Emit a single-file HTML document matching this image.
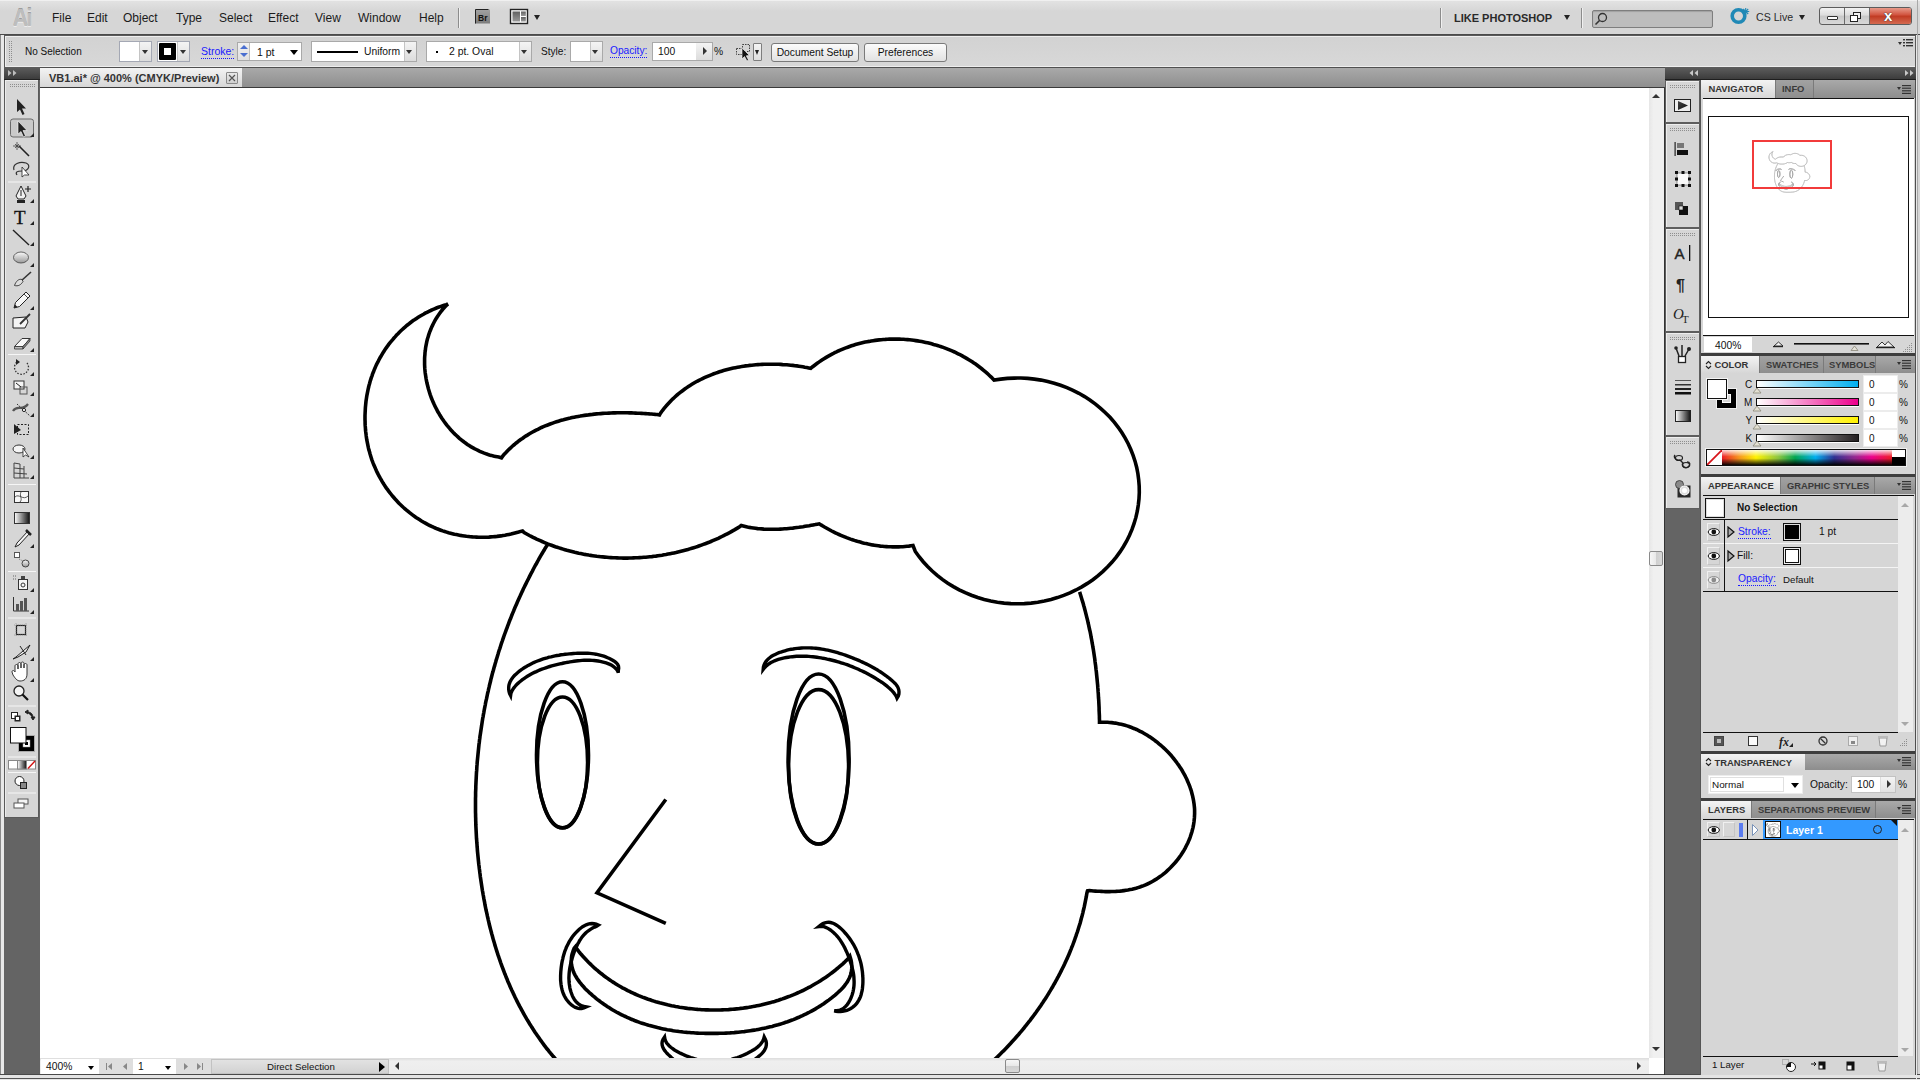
<!DOCTYPE html>
<html><head><meta charset="utf-8">
<style>
*{margin:0;padding:0;box-sizing:border-box}
html,body{width:1920px;height:1080px;overflow:hidden;background:#d6d6d6;font-family:"Liberation Sans",sans-serif;font-size:10.3px;color:#111;position:relative}
.a{position:absolute}
.t{position:absolute;white-space:nowrap;line-height:1}
.lnk{color:#1a1aff;border-bottom:1px dotted #1a1aff}
.box{position:absolute;background:#fff;border:1px solid #a9a9a9}
.dd{position:absolute;background:linear-gradient(#f4f4f4,#dcdcdc);border-left:1px solid #c4c4c4}
.tri{position:absolute;width:0;height:0;border-left:4px solid transparent;border-right:4px solid transparent;border-top:4px solid #222}
.btn{position:absolute;background:linear-gradient(#fbfbfb,#e2e2e2);border:1px solid #7a7a7a;border-radius:3px;text-align:center;font-size:10.3px}
.ptab{position:absolute;font-weight:bold;font-size:9.4px;color:#333;white-space:nowrap;line-height:1}
.hdr{position:absolute;background:linear-gradient(#5e5e5e,#3c3c3c)}
.tabbar{position:absolute;background:linear-gradient(#a9a9a9,#8d8d8d)}
.tabon{position:absolute;background:linear-gradient(#f3f3f3,#d7d7d7)}
.taboff{position:absolute;background:linear-gradient(#a2a2a2,#8e8e8e);border-left:1px solid #7a7a7a;border-right:1px solid #7a7a7a}
.sep{position:absolute;background:#3e3e3e}
.grip{position:absolute;background-image:linear-gradient(90deg,transparent 1px,#d6d6d6 1px),linear-gradient(#8e8e8e 1px,transparent 1px);background-size:2px 2px}
.pmenu{position:absolute;width:15px;height:9px}
</style></head><body>
<!-- window frame -->
<div class="a" style="left:0;top:0;width:1920px;height:35px;background:linear-gradient(#e2e2e2,#d6d6d6 30%,#d6d6d6);border-top:1px solid #f0f0f0"></div>
<div class="a" style="left:0;top:34px;width:1920px;height:1px;background:#4a4a4a"></div>
<div class="a" style="left:0;top:35px;width:4px;height:1040px;background:#e8e8e8"></div><div class="a" style="left:0;top:35px;width:1px;height:1040px;background:#8a8a8a"></div>
<div class="a" style="left:1917px;top:0;width:1px;height:1080px;background:#a8a8a8"></div>
<div class="t" style="left:12.5px;top:6.5px;font-size:23.5px;font-weight:bold;color:#bdbdbd;text-shadow:0 1px 0 #ececec,0 -1px 0 #9c9c9c;letter-spacing:-1.5px;transform:scaleX(0.88);transform-origin:0 0">Ai</div>
<div class="t" style="left:52px;top:12.3px;font-size:12px;color:#1b1b1b">File</div>
<div class="t" style="left:87px;top:12.3px;font-size:12px;color:#1b1b1b">Edit</div>
<div class="t" style="left:123px;top:12.3px;font-size:12px;color:#1b1b1b">Object</div>
<div class="t" style="left:176px;top:12.3px;font-size:12px;color:#1b1b1b">Type</div>
<div class="t" style="left:219px;top:12.3px;font-size:12px;color:#1b1b1b">Select</div>
<div class="t" style="left:268px;top:12.3px;font-size:12px;color:#1b1b1b">Effect</div>
<div class="t" style="left:315px;top:12.3px;font-size:12px;color:#1b1b1b">View</div>
<div class="t" style="left:358px;top:12.3px;font-size:12px;color:#1b1b1b">Window</div>
<div class="t" style="left:419px;top:12.3px;font-size:12px;color:#1b1b1b">Help</div>
<div class="a" style="left:458px;top:8px;width:1px;height:20px;background:#8c8c8c;box-shadow:1px 0 0 #f0f0f0"></div>
<svg class="a" style="left:474px;top:8px" width="58" height="18">
<defs><linearGradient id="brg" x1="0" y1="0" x2="0" y2="1"><stop offset="0" stop-color="#a2a2a2"/><stop offset="1" stop-color="#7c7c7c"/></linearGradient>
<linearGradient id="lyg" x1="0" y1="0" x2="0" y2="1"><stop offset="0" stop-color="#606060"/><stop offset="1" stop-color="#9a9a9a"/></linearGradient></defs>
<rect x="1" y="1.5" width="15" height="14" fill="url(#brg)"/><path d="M1.5 15.5 L1.5 1.5 L14.5 1.5" fill="none" stroke="#222" stroke-width="1"/>
<text x="4" y="12.5" font-family="Liberation Sans" font-size="8.5" font-weight="bold" fill="#111">Br</text>
<rect x="36.5" y="1.5" width="17" height="14" fill="#fff" stroke="#222" stroke-width="1.4"/>
<rect x="38.5" y="3.5" width="7.5" height="10" fill="url(#lyg)"/><rect x="47" y="3.5" width="4.8" height="4.5" fill="url(#lyg)"/><rect x="47" y="9" width="4.8" height="4.5" fill="url(#lyg)"/>
</svg>
<div class="tri" style="left:534px;top:15px;border-left-width:3.5px;border-right-width:3.5px;border-top-width:5px"></div>
<div class="a" style="left:1440px;top:8px;width:1px;height:20px;background:#8c8c8c;box-shadow:1px 0 0 #f0f0f0"></div>
<div class="t" style="left:1454px;top:12.6px;font-size:11px;font-weight:bold;color:#2a2a2a">LIKE PHOTOSHOP</div>
<div class="tri" style="left:1564px;top:15px;border-left-width:3.5px;border-right-width:3.5px;border-top-width:5px"></div>
<div class="a" style="left:1581px;top:8px;width:1px;height:20px;background:#8c8c8c;box-shadow:1px 0 0 #f0f0f0"></div>
<div class="a" style="left:1592px;top:10px;width:121px;height:18px;background:#bdbdbd;border:1px solid #7e7e7e;border-radius:2px;box-shadow:inset 0 1px 1px #a0a0a0"></div>
<svg class="a" style="left:1594px;top:12px" width="14" height="14"><circle cx="8.5" cy="5.5" r="4" fill="none" stroke="#333" stroke-width="1.3"/><line x1="5.5" y1="8.5" x2="1.5" y2="12.5" stroke="#333" stroke-width="1.6"/></svg>
<svg class="a" style="left:1728px;top:6px" width="22" height="20"><circle cx="10.5" cy="10" r="6.3" fill="none" stroke="#2089b6" stroke-width="3.6"/><g stroke="#2089b6" stroke-width="1.1"><line x1="17.7" y1="2" x2="17.7" y2="9"/><line x1="14.2" y1="5.5" x2="21.2" y2="5.5"/><line x1="15.2" y1="3" x2="20.2" y2="8"/><line x1="20.2" y1="3" x2="15.2" y2="8"/></g></svg>
<div class="t" style="left:1756px;top:11.7px;font-size:10.6px;color:#2a2a2a">CS Live</div>
<div class="tri" style="left:1799px;top:14.5px;border-left-width:3.5px;border-right-width:3.5px;border-top-width:5px"></div>
<div class="a" style="left:1819px;top:7px;width:93px;height:18px;border:1px solid #5c5c5c;border-radius:3px;overflow:hidden;background:linear-gradient(#f2f2f2,#dcdcdc 45%,#c8c8c8 50%,#d8d8d8)">
 <div class="a" style="left:24px;top:0;width:1px;height:16px;background:#6a6a6a"></div>
 <div class="a" style="left:49px;top:0;width:1px;height:16px;background:#6a6a6a"></div>
 <div class="a" style="left:50px;top:0;width:42px;height:16px;background:linear-gradient(#e89a8a,#d0513c 45%,#c03a22 50%,#d46a50)"></div>
 <div class="a" style="left:7px;top:8px;width:11px;height:4px;background:#fff;border:1px solid #333;border-radius:1px"></div>
 <div class="a" style="left:33px;top:4px;width:8px;height:7px;border:1.5px solid #222;background:#f0f0f0"></div>
 <div class="a" style="left:30px;top:7px;width:8px;height:7px;border:1.5px solid #222;background:#fff"></div>
 <div class="t" style="left:64px;top:0px;font-size:15px;font-weight:bold;color:#fff;text-shadow:0 0 1px #333,0 0 1px #333">x</div>
</div>

<div class="a" style="left:4px;top:35px;width:1912px;height:33px;background:linear-gradient(#d2d2d2,#d8d8d8);border-top:1px solid #5a5a5a;border-left:1px solid #5a5a5a;border-right:1px solid #5a5a5a;box-shadow:inset 1px 1px 0 #efefef"></div>
<div class="grip" style="left:9px;top:41px;width:3px;height:21px"></div>
<div class="t" style="left:25px;top:46.5px;font-size:10px">No Selection</div>
<div class="box" style="left:119px;top:41px;width:33px;height:21px;border-color:#a4a8b4"></div>
<div class="dd" style="left:139px;top:42px;width:12px;height:19px"></div>
<div class="tri" style="left:142px;top:50px;border-top-color:#333;border-left-width:3.5px;border-right-width:3.5px"></div>
<div class="box" style="left:157px;top:41px;width:33px;height:21px;border-color:#a4a8b4"></div>
<div class="a" style="left:159px;top:43px;width:17px;height:17px;background:#000;border-radius:1px"></div>
<div class="a" style="left:164px;top:48px;width:7px;height:7px;background:#fff"></div>
<div class="dd" style="left:177px;top:42px;width:12px;height:19px"></div>
<div class="tri" style="left:180px;top:50px;border-top-color:#333;border-left-width:3.5px;border-right-width:3.5px"></div>
<div class="t lnk" style="left:201px;top:46px;font-size:10.5px;padding-bottom:1px">Stroke:</div>
<div class="box" style="left:237px;top:42px;width:65px;height:19px"></div>
<div class="a" style="left:238px;top:43px;width:12px;height:17px;background:linear-gradient(#f0f0f0,#e0e0e0);border-right:1px solid #bdbdbd"></div>
<div class="a" style="left:240px;top:45px;width:0;height:0;border-left:4px solid transparent;border-right:4px solid transparent;border-bottom:4px solid #4a6fd0"></div>
<div class="a" style="left:240px;top:53px;width:0;height:0;border-left:4px solid transparent;border-right:4px solid transparent;border-top:4px solid #4a6fd0"></div>
<div class="t" style="left:257px;top:46.5px;font-size:10.5px">1 pt</div>
<div class="tri" style="left:290px;top:50px;border-left-width:4px;border-right-width:4px;border-top-width:5px;border-top-color:#000"></div>
<div class="box" style="left:311px;top:41px;width:106px;height:21px"></div>
<div class="a" style="left:317px;top:50.5px;width:41px;height:2px;background:#000"></div>
<div class="t" style="left:364px;top:46.5px;font-size:10.3px">Uniform</div>
<div class="dd" style="left:404px;top:42px;width:12px;height:19px"></div>
<div class="tri" style="left:406px;top:50px;border-top-color:#333;border-left-width:3.5px;border-right-width:3.5px"></div>
<div class="box" style="left:426px;top:41px;width:106px;height:21px"></div>
<div class="a" style="left:436px;top:51px;width:1.5px;height:1.5px;background:#000"></div>
<div class="t" style="left:449px;top:46.5px;font-size:10.4px">2 pt. Oval</div>
<div class="dd" style="left:519px;top:42px;width:12px;height:19px"></div>
<div class="tri" style="left:521px;top:50px;border-top-color:#333;border-left-width:3.5px;border-right-width:3.5px"></div>
<div class="t" style="left:541px;top:46.5px;font-size:10.1px">Style:</div>
<div class="box" style="left:570px;top:41px;width:33px;height:21px"></div>
<div class="dd" style="left:590px;top:42px;width:12px;height:19px"></div>
<div class="tri" style="left:592px;top:50px;border-top-color:#333;border-left-width:3.5px;border-right-width:3.5px"></div>
<div class="t lnk" style="left:610px;top:46px;font-size:10.2px;padding-bottom:1px">Opacity:</div>
<div class="box" style="left:652px;top:42px;width:61px;height:19px"></div>
<div class="t" style="left:658px;top:46.5px;font-size:10.3px">100</div>
<div class="dd" style="left:696px;top:43px;width:16px;height:17px;border-left:none"></div>
<div class="a" style="left:703px;top:47px;width:0;height:0;border-top:4px solid transparent;border-bottom:4px solid transparent;border-left:4px solid #333"></div>
<div class="t" style="left:714px;top:46.5px;font-size:10.3px">%</div>
<svg class="a" style="left:734px;top:43px" width="20" height="19"><g fill="none" stroke="#444" stroke-width="1" stroke-dasharray="1.5 1"><rect x="2.5" y="5.5" width="6" height="6"/><rect x="8.5" y="1.5" width="7" height="7"/></g><path d="M8 5 L8 16 L10.5 13.5 L13 18 L14.5 17 L12.3 12.8 L15.5 12.5 Z" fill="#111" stroke="#fff" stroke-width="0.6"/></svg>
<div class="a" style="left:753px;top:43px;width:9px;height:18px;background:linear-gradient(#f4f4f4,#dedede);border:1px solid #7e7e7e;border-radius:1px"></div>
<div class="a" style="left:755px;top:50px;width:0;height:0;border-left:2.5px solid transparent;border-right:2.5px solid transparent;border-top:5px solid #222"></div>
<div class="btn" style="left:771px;top:43px;width:88px;height:19px;line-height:17px">Document Setup</div>
<div class="btn" style="left:864px;top:43px;width:83px;height:19px;line-height:17px">Preferences</div>
<svg class="a" style="left:1897px;top:39px" width="18" height="10"><path d="M1 3 L5 3 L3 6 Z" fill="#333"/><g fill="#333"><rect x="6" y="0" width="2" height="1.4"/><rect x="9" y="0" width="7" height="1.4"/><rect x="6" y="3" width="2" height="1.4"/><rect x="9" y="3" width="7" height="1.4"/><rect x="6" y="6" width="2" height="1.4"/><rect x="9" y="6" width="7" height="1.4"/></g></svg>

<div class="a" style="left:4px;top:67px;width:1913px;height:1008px;background:#646464"></div>
<div class="a" style="left:0;top:1074px;width:1920px;height:1px;background:#4a4a4a"></div>
<div class="a" style="left:0;top:1075px;width:1920px;height:5px;background:#e4e4e4"></div>
<div class="a" style="left:0;top:1078px;width:1920px;height:1px;background:#555"></div>
<!-- tab bar -->
<div class="a" style="left:5px;top:66px;width:1910px;height:1px;background:#eeeeee"></div>
<div class="tabbar" style="left:40px;top:67px;width:1625px;height:21px;border-top:1px solid #505050"></div>
<div class="a" style="left:40px;top:87px;width:1625px;height:1px;background:#3a3a3a"></div>
<div class="tabon" style="left:40px;top:68px;width:202px;height:19px"></div>
<div class="t" style="left:49px;top:72.6px;font-size:11px;font-weight:bold;color:#333">VB1.ai* @ 400% (CMYK/Preview)</div>
<div class="a" style="left:226px;top:72px;width:12px;height:12px;border:1px solid #8a8a8a;background:linear-gradient(#e8e8e8,#cfcfcf);border-radius:1px"></div>
<svg class="a" style="left:226px;top:72px" width="12" height="12"><path d="M3 3 L9 9 M9 3 L3 9" stroke="#555" stroke-width="1.2"/></svg>
<!-- canvas -->
<div class="a" style="left:40px;top:88px;width:1609px;height:970px;background:#fff"></div>
<!-- v scroll -->
<div class="a" style="left:1649px;top:88px;width:15px;height:970px;background:linear-gradient(90deg,#e6e6e6,#f0f0f0 30%,#f0f0f0)"></div>
<div class="a" style="left:1664px;top:88px;width:1px;height:987px;background:#333"></div>
<div class="a" style="left:1652px;top:94px;width:0;height:0;border-left:4px solid transparent;border-right:4px solid transparent;border-bottom:4px solid #333"></div>
<div class="a" style="left:1652px;top:1047px;width:0;height:0;border-left:4px solid transparent;border-right:4px solid transparent;border-top:4px solid #333"></div>
<div class="a" style="left:1649px;top:551px;width:14px;height:15px;border:1px solid #8a8a8a;border-radius:2px;background:linear-gradient(90deg,#f6f6f6,#e8e8e8 50%,#cfcfcf 50%,#d8d8d8)"></div>
<!-- status bar -->
<div class="a" style="left:40px;top:1058px;width:1609px;height:16px;background:linear-gradient(#dcdcdc,#efefef 20%,#ececec)"></div>
<div class="a" style="left:1649px;top:1058px;width:15px;height:16px;background:#fff"></div>
<div class="a" style="left:41px;top:1059px;width:58px;height:15px;background:#fff"></div>
<div class="t" style="left:46px;top:1062px;font-size:10.3px">400%</div>
<div class="tri" style="left:88px;top:1066px;border-top-color:#000;border-left-width:3.5px;border-right-width:3.5px"></div>
<div class="a" style="left:99px;top:1059px;width:34px;height:15px;background:#dedede"></div>
<svg class="a" style="left:104px;top:1061px" width="30" height="12"><g fill="#888"><rect x="2" y="2" width="1" height="7"/><path d="M8 2 L4 5.5 L8 9Z"/><path d="M23 2 L19 5.5 L23 9Z"/></g></svg>
<div class="a" style="left:133px;top:1059px;width:43px;height:15px;background:#fff"></div>
<div class="t" style="left:138px;top:1062px;font-size:10.3px">1</div>
<div class="tri" style="left:165px;top:1066px;border-top-color:#000;border-left-width:3.5px;border-right-width:3.5px"></div>
<div class="a" style="left:176px;top:1059px;width:35px;height:15px;background:#dedede"></div>
<svg class="a" style="left:180px;top:1061px" width="30" height="12"><g fill="#888"><path d="M4 2 L8 5.5 L4 9Z"/><path d="M17 2 L21 5.5 L17 9Z"/><rect x="22" y="2" width="1" height="7"/></g></svg>
<div class="a" style="left:211px;top:1059px;width:178px;height:15px;background:linear-gradient(#e2e2e2,#d2d2d2);border:1px solid #c2c2c2"></div>
<div class="t" style="left:267px;top:1062px;font-size:9.7px">Direct Selection</div>
<div class="a" style="left:379px;top:1062px;width:0;height:0;border-top:5px solid transparent;border-bottom:5px solid transparent;border-left:6px solid #000"></div>
<div class="a" style="left:395px;top:1062px;width:0;height:0;border-top:4px solid transparent;border-bottom:4px solid transparent;border-right:4px solid #333"></div>
<div class="a" style="left:1637px;top:1062px;width:0;height:0;border-top:4px solid transparent;border-bottom:4px solid transparent;border-left:4px solid #333"></div>
<div class="a" style="left:1005px;top:1059px;width:15px;height:14px;border:1px solid #8a8a8a;border-radius:2px;background:linear-gradient(#f6f6f6,#e8e8e8 50%,#cfcfcf 50%,#d8d8d8)"></div>

<svg class="a" style="left:0;top:0" width="1920" height="1080" viewBox="0 0 1920 1080">
<defs><clipPath id="cv"><rect x="40" y="88" width="1609" height="970"/></clipPath><g id="face">
<path d="M547.5 545.0L546.3 546.5 545.2 548.2 544.2 550.0 543.2 551.7 542.1 553.5 541.1 555.2 540.1 556.9 539.1 558.7 538.1 560.5 537.2 562.2 536.2 564.0 535.2 565.7 534.2 567.5 533.3 569.3 532.4 571.1 531.4 572.9 530.5 574.6 529.6 576.4 528.7 578.2 527.8 580.0 526.9 581.8 526.0 583.6 525.1 585.4 524.2 587.2 523.3 589.0 522.5 590.9 521.6 592.7 520.8 594.5 520.0 596.3 519.1 598.2 518.3 600.0 517.5 601.8 516.7 603.7 515.9 605.5 515.1 607.3 514.3 609.2 513.6 611.0 512.8 612.9 512.0 614.8 511.3 616.6 510.6 618.5 509.8 620.3 509.1 622.2 508.4 624.1 507.7 625.9 507.0 627.8 506.3 629.7 505.6 631.6 504.9 633.5 504.2 635.3 503.6 637.2 502.9 639.1 502.3 641.0 501.6 642.9 501.0 644.8 500.4 646.7 499.8 648.6 499.1 650.5 498.5 652.4 498.0 654.3 497.4 656.3 496.8 658.2 496.2 660.1 495.7 662.0 495.1 663.9 494.6 665.9 494.0 667.8 493.5 669.7 493.0 671.6 492.4 673.6 491.9 675.5 491.4 677.5 490.9 679.4 490.5 681.3 490.0 683.3 489.5 685.2 489.1 687.2 488.6 689.1 488.2 691.1 487.7 693.0 487.3 695.0 486.9 696.9 486.5 698.9 486.0 700.8 485.6 702.8 485.3 704.8 484.9 706.7 484.5 708.7 484.1 710.7 483.8 712.6 483.4 714.6 483.1 716.6 482.7 718.5 482.4 720.5 482.1 722.5 481.8 724.5 481.5 726.4 481.2 728.4 480.9 730.4 480.6 732.4 480.3 734.4 480.0 736.3 479.8 738.3 479.5 740.3 479.3 742.3 479.0 744.3 478.8 746.3 478.6 748.3 478.4 750.3 478.2 752.3 478.0 754.3 477.8 756.2 477.6 758.2 477.4 760.2 477.2 762.2 477.1 764.2 476.9 766.2 476.8 768.2 476.7 770.2 476.5 772.2 476.4 774.2 476.3 776.2 476.2 778.2 476.1 780.2 476.0 782.2 475.9 784.3 475.8 786.3 475.8 788.3 475.7 790.3 475.6 792.3 475.6 794.3 475.6 796.3 475.5 798.3 475.5 800.3 475.5 802.3 475.5 804.3 475.5 806.3 475.5 808.3 475.5 810.3 475.5 812.3 475.6 814.4 475.6 816.4 475.7 818.4 475.7 820.4 475.8 822.4 475.8 824.4 475.9 826.4 476.0 828.4 476.1 830.4 476.2 832.4 476.3 834.4 476.4 836.5 476.5 838.5 476.7 840.5 476.8 842.5 477.0 844.5 477.1 846.5 477.3 848.5 477.4 850.5 477.6 852.5 477.8 854.5 478.0 856.5 478.2 858.5 478.4 860.5 478.6 862.5 478.8 864.5 479.1 866.5 479.3 868.5 479.6 870.5 479.8 872.5 480.1 874.5 480.3 876.5 480.6 878.5 480.9 880.5 481.2 882.5 481.5 884.5 481.8 886.5 482.1 888.5 482.4 890.5 482.8 892.5 483.1 894.5 483.5 896.5 483.8 898.4 484.2 900.4 484.6 902.4 484.9 904.4 485.3 906.4 485.7 908.3 486.1 910.3 486.6 912.3 487.0 914.2 487.4 916.2 487.9 918.2 488.3 920.1 488.8 922.1 489.2 924.0 489.7 926.0 490.2 928.0 490.7 929.9 491.2 931.8 491.7 933.8 492.3 935.7 492.8 937.7 493.3 939.6 493.9 941.5 494.5 943.5 495.0 945.4 495.6 947.3 496.2 949.2 496.8 951.1 497.4 953.0 498.0 954.9 498.7 956.8 499.3 958.7 500.0 960.6 500.6 962.5 501.3 964.4 502.0 966.3 502.7 968.2 503.4 970.0 504.1 971.9 504.8 973.8 505.6 975.6 506.3 977.5 507.1 979.3 507.8 981.2 508.6 983.0 509.4 984.8 510.2 986.7 511.0 988.5 511.8 990.3 512.7 992.1 513.5 993.9 514.4 995.7 515.2 997.5 516.1 999.3 517.0 1001.1 517.9 1002.9 518.8 1004.6 519.7 1006.4 520.7 1008.2 521.6 1009.9 522.6 1011.7 523.5 1013.4 524.5 1015.2 525.5 1016.9 526.5 1018.6 527.5 1020.3 528.6 1022.0 529.6 1023.7 530.7 1025.4 531.7 1027.1 532.8 1028.8 533.9 1030.5 535.0 1032.2 536.1 1033.8 537.3 1035.5 538.4 1037.1 539.6 1038.8 540.7 1040.4 541.9 1042.0 543.1 1043.7 544.3 1045.3 545.5 1046.9 546.7 1048.5 548.0 1050.0 549.2 1051.6 550.5 1053.2 551.8 1054.7 553.1 1056.3 554.4 1057.8 555.7 1059.3 557.0 1060.8 558.4 1062.3 559.7 1063.8 561.1 1065.3 562.5 1066.8 563.8 1068.2 565.3 1069.7 566.7 1071.1 568.1 1072.5 569.5 1073.9 571.0 1075.3 572.4 1076.7 573.9 1078.1 575.4 1079.4 576.9 1080.7 578.4 1082.1 579.9 1083.4 581.4 1084.7 583.0 1085.9 584.5 1087.2 586.1 1088.4 587.7 1089.7 589.3 1090.9 590.9 1092.1 592.5 1093.2 594.1 1094.4 595.7 1095.5 597.4 1096.6 599.1 1097.8 600.7 1098.8 602.4 1099.9 604.1 1101.0 605.8 1102.0 607.5 1103.0 609.2 1104.0 611.0 1105.0 612.7 1105.9 614.5 1106.8 616.3 1107.7 618.0 1108.6 619.8 1109.5 621.6 1110.3 623.4 1111.2 625.3 1112.0 627.1 1112.7 628.9 1113.5 630.8 1114.2 632.7 1115.0 634.5 1115.7 636.4 1116.4 638.3 1117.0 640.2 1117.7 642.1 1118.3 644.0 1118.9 646.0 1119.5 647.9 1120.0 649.8 1120.6 651.8 1121.1 653.7 1121.6 655.7 1122.1 657.6 1122.6 659.6 1123.1 661.6 1123.5 663.6 1123.9 665.6 1124.4 667.5 1124.8 669.5 1125.1 671.5 1125.5 673.5 1125.9 675.6 1126.2 677.6 1126.5 679.6 1126.8 681.6 1127.1 683.6 1127.4 685.6 1127.7 687.7 1127.9 689.7 1128.1 691.7 1128.4 693.8 1128.6 695.8 1128.8 697.8 1129.0 699.9 1129.1 701.9 1129.3 703.9 1129.4 706.0 1129.6 708.0 1129.7 710.0 1129.8 712.1 1129.9 714.1 1130.0 716.2 1130.1 718.2 1130.2 720.2 1130.2 722.2 1130.3 724.3 1130.3 726.3 1130.4 728.3 1130.4 730.3 1130.4 732.3 1130.4 734.4 1130.4 736.4 1130.4 738.4 1130.4 740.4 1130.4 742.4 1130.4 744.4 1130.3 746.3 1130.3 748.3 1130.2 750.3 1130.2 752.3 1130.1 754.2 1130.0 756.2 1130.0 758.1 1129.9 760.0 1130.0"/>
<path d="M1079.6 591.9L1080.2 593.8 1080.8 595.8 1081.4 597.7 1082.0 599.7 1082.6 601.6 1083.2 603.6 1083.7 605.5 1084.3 607.5 1084.8 609.5 1085.3 611.4 1085.8 613.4 1086.3 615.4 1086.8 617.4 1087.3 619.3 1087.8 621.3 1088.2 623.3 1088.7 625.3 1089.1 627.3 1089.5 629.3 1090.0 631.2 1090.4 633.2 1090.8 635.2 1091.1 637.2 1091.5 639.2 1091.9 641.2 1092.2 643.2 1092.6 645.2 1092.9 647.2 1093.3 649.3 1093.6 651.3 1093.9 653.3 1094.2 655.3 1094.5 657.3 1094.8 659.3 1095.0 661.3 1095.3 663.4 1095.6 665.4 1095.8 667.4 1096.0 669.4 1096.3 671.4 1096.5 673.5 1096.7 675.5 1096.9 677.5 1097.1 679.5 1097.3 681.6 1097.5 683.6 1097.7 685.6 1097.8 687.7 1098.0 689.7 1098.1 691.7 1098.3 693.7 1098.4 695.8 1098.5 697.8 1098.7 699.8 1098.8 701.9 1098.9 703.9 1099.0 705.9 1099.1 708.0 1099.1 710.0 1099.2 712.0 1099.3 714.1 1099.4 716.1 1099.4 718.1 1099.5 720.2 1099.5 722.2L1101.6 722.3 1103.6 722.3 1105.6 722.3 1107.6 722.3 1109.5 722.5 1111.5 722.6 1113.5 722.9 1115.4 723.1 1117.4 723.5 1119.3 723.9 1121.3 724.3 1123.2 724.8 1125.1 725.3 1127.1 725.9 1129.0 726.5 1130.9 727.2 1132.7 728.0 1134.6 728.7 1136.5 729.5 1138.3 730.4 1140.1 731.3 1142.0 732.2 1143.8 733.2 1145.5 734.2 1147.3 735.3 1149.0 736.4 1150.8 737.5 1152.5 738.7 1154.1 739.9 1155.8 741.2 1157.4 742.4 1159.0 743.8 1160.6 745.1 1162.2 746.5 1163.7 747.9 1165.2 749.3 1166.7 750.8 1168.2 752.3 1169.6 753.8 1171.0 755.3 1172.3 756.9 1173.6 758.5 1174.9 760.1 1176.2 761.8 1177.4 763.5 1178.6 765.1 1179.8 766.9 1180.9 768.6 1182.0 770.3 1183.0 772.1 1184.0 773.9 1185.0 775.7 1185.9 777.5 1186.8 779.3 1187.6 781.2 1188.4 783.1 1189.2 784.9 1189.9 786.8 1190.5 788.7 1191.2 790.6 1191.7 792.5 1192.2 794.5 1192.7 796.4 1193.1 798.3 1193.5 800.3 1193.8 802.2 1194.1 804.2 1194.3 806.1 1194.5 808.1 1194.6 810.0 1194.6 812.0 1194.6 814.0 1194.5 815.9 1194.4 817.9 1194.2 819.8 1194.0 821.8 1193.7 823.7 1193.4 825.7 1193.0 827.6 1192.5 829.5 1192.0 831.5 1191.4 833.4 1190.8 835.3 1190.2 837.1 1189.5 839.0 1188.7 840.9 1187.9 842.7 1187.0 844.5 1186.1 846.3 1185.2 848.1 1184.2 849.9 1183.2 851.6 1182.1 853.3 1181.0 855.0 1179.8 856.7 1178.6 858.3 1177.4 859.9 1176.1 861.5 1174.8 863.1 1173.4 864.6 1172.0 866.1 1170.6 867.6 1169.1 869.0 1167.6 870.4 1166.1 871.8 1164.6 873.1 1163.0 874.4 1161.4 875.6 1159.7 876.8 1158.0 878.0 1156.3 879.1 1154.6 880.1 1152.8 881.2 1151.1 882.2 1149.3 883.1 1147.4 884.0 1145.6 884.8 1143.7 885.6 1141.8 886.3 1139.9 887.0 1138.0 887.6 1136.0 888.2 1134.0 888.7 1132.1 889.2 1130.1 889.6 1128.0 890.0 1126.0 890.3 1124.0 890.6 1121.9 890.9 1119.9 891.1 1117.9 891.2 1115.8 891.4 1113.7 891.5 1111.7 891.5 1109.6 891.6 1107.6 891.6 1105.5 891.6 1103.5 891.5 1101.4 891.4 1099.4 891.3 1097.4 891.2 1095.4 891.1 1093.4 891.0 1091.4 890.8 1089.4 890.6 1087.5 890.8L1087.0 892.7 1086.6 894.7 1086.3 896.7 1085.9 898.7 1085.5 900.7 1085.1 902.7 1084.7 904.7 1084.3 906.7 1083.8 908.7 1083.3 910.7 1082.9 912.6 1082.4 914.6 1081.9 916.6 1081.3 918.5 1080.8 920.5 1080.3 922.4 1079.7 924.4 1079.1 926.3 1078.5 928.2 1077.9 930.2 1077.3 932.1 1076.6 934.0 1076.0 935.9 1075.3 937.8 1074.7 939.7 1074.0 941.6 1073.3 943.5 1072.6 945.4 1071.8 947.2 1071.1 949.1 1070.3 951.0 1069.6 952.8 1068.8 954.7 1068.0 956.5 1067.2 958.4 1066.3 960.2 1065.5 962.0 1064.7 963.8 1063.8 965.7 1062.9 967.5 1062.0 969.3 1061.1 971.1 1060.2 972.9 1059.3 974.6 1058.4 976.4 1057.4 978.2 1056.5 980.0 1055.5 981.7 1054.5 983.5 1053.5 985.2 1052.5 987.0 1051.5 988.7 1050.5 990.4 1049.4 992.1 1048.4 993.8 1047.3 995.6 1046.3 997.3 1045.2 998.9 1044.1 1000.6 1043.0 1002.3 1041.8 1004.0 1040.7 1005.7 1039.6 1007.3 1038.4 1009.0 1037.3 1010.6 1036.1 1012.3 1034.9 1013.9 1033.7 1015.5 1032.5 1017.1 1031.3 1018.7 1030.1 1020.3 1028.8 1021.9 1027.6 1023.5 1026.3 1025.1 1025.0 1026.7 1023.8 1028.3 1022.5 1029.8 1021.2 1031.4 1019.9 1032.9 1018.6 1034.5 1017.2 1036.0 1015.9 1037.5 1014.6 1039.0 1013.2 1040.5 1011.8 1042.0 1010.5 1043.5 1009.1 1045.0 1007.7 1046.5 1006.3 1048.0 1004.9 1049.4 1003.5 1050.9 1002.0 1052.3 1000.6 1053.7 999.1 1055.2 997.7 1056.6 996.2 1058.0 994.7 1059.4 993.3 1060.7 991.8 1062.1 990.3 1063.5 988.7 1064.8 987.2 1066.2 985.7 1067.5 984.2 1068.8 982.6 1070.1 981.0 1071.4 979.5 1072.7 977.9 1073.9 976.3 1075.2 974.7 1076.4 973.1 1077.7 971.5 1078.9 969.9 1080.1 968.3 1081.3 966.6 1082.5 965.0 1083.6 963.3 1084.8 961.6 1085.9 960.0 1087.0 958.3 1088.1 956.6 1089.2 954.9 1090.3 953.2 1091.4 951.5 1092.4 949.7 1093.4 948.0 1094.5 946.3 1095.5 944.5 1096.4 942.8 1097.4 941.0 1098.4 939.2 1099.3 937.4 1100.2 935.7 1101.1 933.9 1102.0 932.0 1102.9 930.2 1103.8 928.4 1104.6 926.6 1105.5 924.8 1106.3 922.9 1107.1 921.1 1107.8 919.2 1108.6 917.3 1109.4 915.5 1110.1 913.6 1110.8 911.7 1111.5 909.8 1112.2 907.9 1112.9 906.0 1113.5 904.1 1114.1 902.2 1114.8 900.3 1115.4 898.4 1115.9 896.4 1116.5 894.5 1117.1 892.5 1117.6 890.6 1118.1 888.6 1118.6 886.7 1119.1 884.7 1119.6 882.7 1120.1 880.8 1120.5 878.8 1121.0 876.8 1121.4 874.8 1121.8 872.8 1122.2 870.9 1122.6 868.9 1123.0 866.9 1123.3 864.9 1123.7 862.8 1124.0 860.8 1124.3 858.8 1124.7 856.8 1125.0 854.8 1125.2 852.8 1125.5 850.8 1125.8 848.7 1126.1 846.7 1126.3 844.7 1126.5 842.7 1126.8 840.6 1127.0 838.6 1127.2 836.6 1127.4 834.5 1127.6 832.5 1127.8 830.5 1127.9 828.4 1128.1 826.4 1128.2 824.4 1128.4 822.3 1128.5 820.3 1128.7 818.2 1128.8 816.2 1128.9 814.2 1129.0 812.1 1129.1 810.1 1129.2 808.1 1129.3 806.0 1129.4 804.0 1129.5 802.0 1129.5 800.0 1129.6 797.9 1129.6 795.9 1129.7 793.9 1129.7 791.9 1129.8 789.9 1129.8 787.8 1129.9 785.8 1129.9 783.8 1129.9 781.8 1129.9 779.8 1130.0 777.8 1130.0 775.8 1130.0 773.8 1130.0 771.8 1130.0 769.9 1130.0 767.9 1130.0 765.9 1130.0 763.9 1130.0 762.0 1130.0 760.0 1130.0"/>
<path d="M448.0 304.0L446.4 305.2 445.0 306.8 443.5 308.4 442.2 310.0 440.9 311.6 439.7 313.3 438.5 315.0 437.3 316.7 436.2 318.4 435.2 320.2 434.2 322.0 433.3 323.8 432.4 325.6 431.5 327.4 430.8 329.3 430.0 331.2 429.3 333.0 428.7 334.9 428.1 336.9 427.5 338.8 427.0 340.7 426.6 342.7 426.2 344.7 425.8 346.6 425.5 348.6 425.3 350.6 425.0 352.6 424.9 354.6 424.7 356.6 424.6 358.6 424.6 360.6 424.6 362.7 424.6 364.7 424.7 366.7 424.8 368.7 425.0 370.8 425.2 372.8 425.5 374.8 425.8 376.8 426.1 378.8 426.5 380.8 426.9 382.8 427.4 384.8 427.9 386.8 428.4 388.8 429.0 390.7 429.6 392.7 430.2 394.6 430.9 396.6 431.6 398.5 432.4 400.4 433.2 402.3 434.0 404.1 434.9 406.0 435.8 407.8 436.8 409.7 437.7 411.5 438.8 413.2 439.8 415.0 440.9 416.7 442.0 418.5 443.1 420.1 444.3 421.8 445.5 423.4 446.8 425.1 448.1 426.6 449.4 428.2 450.7 429.7 452.1 431.2 453.5 432.7 454.9 434.1 456.4 435.5 457.9 436.9 459.4 438.3 461.0 439.6 462.5 440.8 464.1 442.0 465.8 443.2 467.4 444.4 469.1 445.5 470.8 446.6 472.6 447.6 474.4 448.6 476.2 449.5 478.0 450.4 479.8 451.3 481.7 452.1 483.6 452.9 485.5 453.6 487.4 454.3 489.4 454.9 491.4 455.4 493.4 456.0 495.4 456.4 497.5 456.8 499.6 457.2 501.5 457.8L502.7 456.1 504.0 454.5 505.5 453.0 506.9 451.5 508.3 450.0 509.8 448.6 511.3 447.2 512.8 445.8 514.4 444.5 515.9 443.2 517.5 442.0 519.1 440.7 520.7 439.5 522.4 438.4 524.0 437.2 525.7 436.1 527.4 435.1 529.1 434.0 530.8 433.0 532.6 432.0 534.3 431.1 536.1 430.1 537.9 429.3 539.7 428.4 541.5 427.5 543.4 426.7 545.2 425.9 547.1 425.2 548.9 424.5 550.8 423.8 552.7 423.1 554.6 422.4 556.5 421.8 558.5 421.2 560.4 420.6 562.4 420.1 564.3 419.5 566.3 419.0 568.3 418.5 570.3 418.1 572.2 417.6 574.2 417.2 576.2 416.8 578.3 416.4 580.3 416.1 582.3 415.7 584.3 415.4 586.4 415.1 588.4 414.9 590.4 414.6 592.5 414.4 594.5 414.1 596.6 413.9 598.7 413.8 600.7 413.6 602.8 413.4 604.8 413.3 606.9 413.2 608.9 413.1 611.0 413.0 613.1 412.9 615.1 412.9 617.2 412.8 619.2 412.8 621.3 412.8 623.3 412.8 625.4 412.8 627.4 412.8 629.5 412.9 631.5 412.9 633.5 413.0 635.5 413.1 637.6 413.2 639.6 413.3 641.6 413.4 643.6 413.5 645.6 413.6 647.6 413.7 649.5 413.9 651.5 414.0 653.5 414.2 655.4 414.4 657.3 414.5 659.5 415.0L660.5 413.2 661.7 411.5 663.0 409.8 664.3 408.2 665.6 406.6 667.0 405.0 668.4 403.5 669.8 402.0 671.2 400.5 672.6 399.1 674.1 397.7 675.6 396.3 677.1 395.0 678.7 393.7 680.3 392.4 681.9 391.2 683.5 390.0 685.1 388.8 686.8 387.6 688.4 386.5 690.1 385.4 691.9 384.3 693.6 383.3 695.3 382.3 697.1 381.3 698.9 380.4 700.7 379.5 702.5 378.6 704.4 377.7 706.2 376.9 708.1 376.1 710.0 375.3 711.8 374.6 713.8 373.8 715.7 373.1 717.6 372.5 719.5 371.8 721.5 371.2 723.5 370.6 725.4 370.1 727.4 369.6 729.4 369.1 731.4 368.6 733.4 368.1 735.4 367.7 737.5 367.3 739.5 366.9 741.5 366.6 743.6 366.2 745.6 365.9 747.7 365.7 749.7 365.4 751.8 365.2 753.8 365.0 755.9 364.8 757.9 364.6 760.0 364.5 762.1 364.4 764.1 364.3 766.2 364.3 768.3 364.2 770.3 364.2 772.4 364.2 774.5 364.2 776.5 364.3 778.6 364.3 780.6 364.4 782.7 364.6 784.7 364.7 786.8 364.8 788.8 365.0 790.8 365.2 792.8 365.4 794.9 365.7 796.9 365.9 798.9 366.2 800.9 366.5 802.8 366.8 804.8 367.2 806.8 367.5 808.7 367.9 810.8 368.3L812.3 367.0 814.0 365.7 815.6 364.5 817.2 363.3 818.9 362.1 820.6 360.9 822.3 359.8 824.0 358.7 825.8 357.6 827.5 356.6 829.3 355.6 831.1 354.6 832.9 353.7 834.7 352.7 836.5 351.9 838.3 351.0 840.2 350.2 842.1 349.4 843.9 348.6 845.8 347.9 847.7 347.2 849.6 346.5 851.5 345.8 853.5 345.2 855.4 344.6 857.4 344.1 859.3 343.6 861.3 343.1 863.2 342.6 865.2 342.1 867.2 341.7 869.2 341.4 871.2 341.0 873.2 340.7 875.2 340.4 877.2 340.1 879.2 339.9 881.2 339.7 883.3 339.5 885.3 339.4 887.3 339.2 889.3 339.1 891.4 339.1 893.4 339.1 895.4 339.1 897.5 339.1 899.5 339.1 901.5 339.2 903.5 339.3 905.6 339.5 907.6 339.6 909.6 339.8 911.6 340.0 913.7 340.3 915.7 340.6 917.7 340.9 919.7 341.2 921.7 341.6 923.7 342.0 925.7 342.4 927.6 342.8 929.6 343.3 931.6 343.8 933.5 344.4 935.5 344.9 937.4 345.5 939.4 346.1 941.3 346.8 943.2 347.4 945.1 348.1 947.0 348.8 948.9 349.6 950.8 350.4 952.6 351.2 954.5 352.0 956.3 352.9 958.1 353.8 960.0 354.7 961.8 355.6 963.5 356.6 965.3 357.6 967.0 358.6 968.8 359.7 970.5 360.7 972.2 361.8 973.9 363.0 975.6 364.1 977.2 365.3 978.8 366.5 980.4 367.7 982.0 369.0 983.6 370.3 985.2 371.6 986.7 372.9 988.2 374.3 989.7 375.7 991.2 377.1 992.6 378.6 994.0 380.0L1000.7 379.1 1007.4 378.4 1014.2 378.1 1020.9 378.0 1027.7 378.4 1034.4 379.1 1041.1 380.1 1047.7 381.5 1054.2 383.2 1060.6 385.2 1066.9 387.6 1073.0 390.3 1078.9 393.3 1084.6 396.6 1090.2 400.2 1095.5 404.1 1100.6 408.3 1105.4 412.7 1110.0 417.3 1114.2 422.2 1118.2 427.3 1121.8 432.6 1125.2 438.1 1128.2 443.7 1130.8 449.5 1133.1 455.4 1135.1 461.4 1136.7 467.5 1137.9 473.7 1138.7 479.9 1139.2 486.2 1139.3 492.5 1139.0 498.8 1138.3 505.0 1137.3 511.2 1135.9 517.4 1134.1 523.4 1132.0 529.4 1129.5 535.2 1126.7 541.0 1123.5 546.5 1120.0 551.9 1116.2 557.1 1112.1 562.1 1107.7 566.8 1103.0 571.4 1098.1 575.6 1092.9 579.7 1087.4 583.4 1081.8 586.9 1076.0 590.0 1069.9 592.9 1063.7 595.4 1057.4 597.6 1051.0 599.5 1044.4 601.1 1037.8 602.3 1031.1 603.1 1024.3 603.6 1017.6 603.8 1010.8 603.6 1004.1 603.1 997.4 602.2 990.7 601.0 984.2 599.4 977.7 597.5 971.4 595.2 965.2 592.7 959.2 589.8 953.4 586.6 947.8 583.2 942.3 579.4 937.2 575.3 932.2 571.0 927.6 566.5 923.2 561.7 919.1 556.7 915.3 551.5 913.0 545.5L911.0 545.8 908.9 546.1 906.9 546.3 904.9 546.5 902.8 546.7 900.8 546.8 898.7 546.9 896.7 546.9 894.7 546.9 892.6 546.9 890.6 546.8 888.5 546.7 886.5 546.6 884.4 546.5 882.4 546.3 880.4 546.1 878.3 545.8 876.3 545.5 874.3 545.2 872.3 544.9 870.3 544.5 868.2 544.1 866.2 543.6 864.2 543.2 862.3 542.7 860.3 542.1 858.3 541.6 856.3 541.0 854.4 540.4 852.4 539.7 850.5 539.1 848.5 538.4 846.6 537.7 844.7 536.9 842.8 536.1 840.9 535.3 839.0 534.5 837.2 533.7 835.3 532.8 833.5 531.9 831.7 531.0 829.9 530.0 828.1 529.0 826.3 528.0 824.5 527.0 822.8 526.0 821.0 524.9 819.3 523.8L817.3 524.2 815.3 524.6 813.2 524.9 811.2 525.3 809.2 525.7 807.1 526.0 805.1 526.3 803.1 526.7 801.0 527.0 798.9 527.3 796.9 527.5 794.8 527.8 792.8 528.1 790.7 528.3 788.6 528.5 786.5 528.7 784.5 528.8 782.4 529.0 780.3 529.1 778.3 529.2 776.2 529.3 774.1 529.3 772.0 529.3 770.0 529.3 767.9 529.3 765.8 529.2 763.8 529.1 761.7 528.9 759.6 528.8 757.6 528.6 755.5 528.3 753.5 528.0 751.4 527.7 749.4 527.4 747.4 527.0 745.3 526.5 743.3 526.0 741.3 525.5L739.6 526.8 737.8 527.9 736.1 528.9 734.4 529.9 732.6 530.9 730.9 531.9 729.1 532.9 727.3 533.8 725.5 534.7 723.7 535.6 721.9 536.5 720.1 537.4 718.3 538.3 716.4 539.1 714.6 539.9 712.7 540.7 710.9 541.5 709.0 542.3 707.1 543.0 705.2 543.7 703.3 544.4 701.4 545.1 699.5 545.8 697.6 546.5 695.7 547.1 693.7 547.7 691.8 548.3 689.8 548.9 687.9 549.5 685.9 550.0 684.0 550.5 682.0 551.0 680.0 551.5 678.0 552.0 676.0 552.5 674.1 552.9 672.1 553.3 670.1 553.7 668.0 554.1 666.0 554.5 664.0 554.8 662.0 555.2 660.0 555.5 658.0 555.8 655.9 556.1 653.9 556.3 651.9 556.6 649.8 556.8 647.8 557.0 645.8 557.2 643.7 557.3 641.7 557.5 639.6 557.6 637.6 557.7 635.5 557.8 633.5 557.9 631.5 558.0 629.4 558.0 627.4 558.1 625.3 558.1 623.3 558.1 621.2 558.0 619.2 558.0 617.1 557.9 615.1 557.8 613.0 557.7 611.0 557.6 609.0 557.5 606.9 557.3 604.9 557.1 602.8 556.9 600.8 556.7 598.8 556.5 596.8 556.3 594.7 556.0 592.7 555.7 590.7 555.4 588.7 555.1 586.7 554.7 584.7 554.4 582.7 554.0 580.7 553.6 578.7 553.2 576.7 552.7 574.7 552.3 572.8 551.8 570.8 551.3 568.8 550.8 566.9 550.3 564.9 549.7 563.0 549.1 561.1 548.5 559.1 547.9 557.2 547.3 555.3 546.7 553.4 546.0 551.5 545.3 549.6 544.6 547.7 543.9 545.8 543.1 544.0 542.3 542.1 541.5 540.3 540.7 538.4 539.9 536.6 539.1 534.8 538.2 533.0 537.3 531.2 536.4 529.4 535.5 527.6 534.5 525.8 533.5 524.1 532.6 522.5 531.0L520.6 531.4 518.7 532.0 516.8 532.5 514.9 533.0 512.9 533.5 511.0 534.0 509.0 534.4 507.0 534.8 505.0 535.2 503.0 535.5 501.0 535.9 499.0 536.1 497.0 536.4 495.0 536.6 492.9 536.8 490.9 536.9 488.9 537.1 486.8 537.2 484.8 537.2 482.7 537.2 480.7 537.2 478.6 537.2 476.6 537.1 474.6 537.0 472.5 536.9 470.5 536.7 468.5 536.5 466.4 536.3 464.4 536.0 462.4 535.7 460.4 535.4 458.4 535.0 456.4 534.6 454.4 534.2 452.4 533.7 450.5 533.2 448.5 532.7 446.6 532.1 444.7 531.5 442.7 530.9 440.8 530.2 439.0 529.5 437.1 528.8 435.2 528.0 433.4 527.2 431.6 526.3 429.8 525.5 428.0 524.6 426.2 523.6 424.5 522.7 422.8 521.7 421.1 520.7 419.4 519.6 417.7 518.5 416.0 517.4 414.4 516.3 412.8 515.1 411.2 513.9 409.6 512.7 408.1 511.4 406.5 510.1 405.0 508.8 403.5 507.5 402.1 506.2 400.6 504.8 399.2 503.4 397.8 501.9 396.5 500.5 395.1 499.0 393.8 497.5 392.5 496.0 391.3 494.5 390.0 492.9 388.8 491.3 387.6 489.7 386.4 488.1 385.3 486.4 384.2 484.8 383.1 483.1 382.1 481.4 381.1 479.6 380.1 477.9 379.1 476.1 378.2 474.4 377.3 472.6 376.4 470.8 375.6 468.9 374.8 467.1 374.0 465.2 373.2 463.4 372.5 461.5 371.8 459.6 371.2 457.7 370.6 455.7 370.0 453.8 369.5 451.8 368.9 449.9 368.4 447.9 368.0 445.9 367.6 443.9 367.2 441.9 366.8 439.9 366.5 437.9 366.2 435.9 366.0 433.9 365.7 431.8 365.5 429.8 365.4 427.8 365.2 425.7 365.1 423.7 365.1 421.6 365.0 419.6 365.0 417.6 365.0 415.5 365.1 413.5 365.2 411.4 365.3 409.4 365.4 407.4 365.6 405.3 365.8 403.3 366.0 401.3 366.3 399.3 366.6 397.3 366.9 395.3 367.3 393.3 367.7 391.3 368.1 389.3 368.6 387.3 369.0 385.4 369.6 383.4 370.1 381.5 370.7 379.6 371.3 377.7 372.0 375.8 372.6 373.9 373.4 372.0 374.1 370.1 374.9 368.3 375.7 366.4 376.5 364.6 377.4 362.8 378.3 361.1 379.2 359.3 380.2 357.5 381.2 355.8 382.2 354.1 383.2 352.4 384.3 350.7 385.4 349.1 386.6 347.4 387.7 345.8 388.9 344.2 390.1 342.6 391.4 341.1 392.7 339.6 394.0 338.0 395.3 336.6 396.6 335.1 398.0 333.7 399.4 332.2 400.9 330.8 402.3 329.5 403.8 328.1 405.3 326.8 406.8 325.5 408.4 324.3 410.0 323.0 411.6 321.8 413.2 320.6 414.9 319.5 416.5 318.4 418.2 317.3 419.9 316.2 421.7 315.2 423.5 314.2 425.2 313.2 427.0 312.3 428.9 311.3 430.7 310.5 432.6 309.6 434.5 308.8 436.4 308.0 438.3 307.3 440.3 306.6 442.2 305.9 444.2 305.3 446.2 304.7 448.0 304.0Z" fill="#fff"/>
<ellipse cx="562.5" cy="754.7" rx="26" ry="73"/>
<ellipse cx="562.5" cy="762.5" rx="25.1" ry="65.5"/>
<ellipse cx="818.6" cy="759" rx="30.5" ry="85"/>
<ellipse cx="818.6" cy="766.8" rx="30" ry="77.2"/>
<path d="M510.6 695.6L509.6 693.6 509.0 691.4 508.7 689.3 508.7 687.3 508.9 685.4 509.4 683.6 510.1 681.8 511.0 680.1 512.1 678.4 513.3 676.8 514.7 675.3 516.2 673.9 517.8 672.5 519.4 671.2 521.1 669.9 522.9 668.7 524.6 667.5 526.4 666.5 528.2 665.4 530.1 664.4 531.9 663.5 533.7 662.6 535.6 661.8 537.5 661.0 539.4 660.3 541.3 659.6 543.2 658.9 545.2 658.3 547.1 657.8 549.1 657.2 551.0 656.8 553.0 656.3 555.0 655.9 557.0 655.5 559.0 655.2 561.1 654.8 563.1 654.6 565.1 654.3 567.2 654.1 569.2 653.9 571.3 653.7 573.4 653.5 575.4 653.4 577.5 653.3 579.6 653.2 581.6 653.2 583.7 653.2 585.8 653.2 587.8 653.3 589.9 653.4 591.9 653.6 594.0 653.9 596.0 654.2 598.0 654.6 599.9 655.1 601.9 655.6 603.8 656.2 605.7 656.9 607.6 657.7 609.5 658.5 611.3 659.5 613.1 660.5 614.9 661.7 616.4 663.0 617.7 664.5 618.5 666.3 618.7 668.3 618.3 670.7 618.3 672.7L617.5 670.7 616.3 669.1 614.9 667.7 613.3 666.4 611.7 665.3 609.9 664.4 608.0 663.6 606.1 662.9 604.1 662.3 602.1 661.8 600.1 661.4 598.1 661.0 596.1 660.7 594.1 660.5 592.1 660.4 590.0 660.3 588.0 660.2 586.0 660.3 584.0 660.3 582.0 660.4 580.0 660.6 578.0 660.8 575.9 661.0 573.9 661.3 571.9 661.6 569.9 661.9 567.8 662.3 565.8 662.6 563.8 663.0 561.8 663.5 559.8 663.9 557.7 664.4 555.7 664.9 553.7 665.4 551.7 665.9 549.7 666.5 547.8 667.1 545.8 667.8 543.9 668.5 541.9 669.2 540.0 669.9 538.1 670.7 536.3 671.6 534.4 672.4 532.6 673.3 530.8 674.3 529.1 675.3 527.4 676.3 525.7 677.4 524.0 678.6 522.4 679.7 520.8 681.0 519.2 682.3 517.7 683.6 516.3 685.0 515.0 686.5 513.7 688.1 512.6 689.8 511.7 691.5 510.9 693.4 510.6 695.6Z" style="stroke-width:var(--sw2)"/>
<path d="M763.2 669.4L763.4 667.1 764.0 665.1 764.8 663.3 765.9 661.6 767.1 660.1 768.5 658.7 770.0 657.5 771.6 656.3 773.4 655.3 775.2 654.4 777.1 653.5 779.0 652.7 781.0 652.0 783.0 651.4 785.0 650.8 787.0 650.2 789.0 649.7 791.1 649.3 793.1 649.0 795.2 648.6 797.3 648.4 799.4 648.2 801.5 648.0 803.5 647.9 805.6 647.9 807.6 647.9 809.7 647.9 811.7 648.0 813.8 648.1 815.8 648.3 817.8 648.5 819.8 648.8 821.8 649.1 823.8 649.4 825.8 649.8 827.8 650.2 829.7 650.6 831.7 651.1 833.7 651.6 835.6 652.1 837.6 652.7 839.5 653.3 841.5 653.9 843.4 654.5 845.3 655.2 847.2 655.9 849.2 656.6 851.1 657.3 853.0 658.1 854.9 658.9 856.8 659.6 858.7 660.4 860.6 661.3 862.4 662.1 864.3 663.0 866.2 663.9 868.0 664.8 869.9 665.8 871.7 666.7 873.5 667.7 875.3 668.8 877.1 669.8 878.8 670.9 880.6 672.0 882.3 673.1 884.0 674.3 885.7 675.5 887.4 676.8 889.0 678.0 890.6 679.4 892.2 680.7 893.7 682.1 895.1 683.5 896.4 685.0 897.5 686.6 898.3 688.3 898.8 690.0 899.0 691.9 898.9 693.9 898.3 696.0 897.0 698.2L896.2 696.2 895.1 694.6 893.9 692.9 892.6 691.4 891.2 689.9 889.7 688.5 888.2 687.2 886.7 685.9 885.0 684.6 883.4 683.4 881.7 682.2 880.0 681.1 878.2 680.0 876.5 678.9 874.7 677.8 873.0 676.8 871.2 675.7 869.4 674.8 867.6 673.8 865.8 672.8 863.9 671.9 862.1 671.0 860.2 670.2 858.4 669.3 856.5 668.5 854.6 667.7 852.7 666.9 850.8 666.2 848.9 665.4 847.0 664.7 845.0 664.0 843.1 663.4 841.1 662.8 839.2 662.2 837.2 661.6 835.2 661.0 833.2 660.5 831.2 660.0 829.2 659.5 827.2 659.1 825.2 658.6 823.1 658.3 821.1 657.9 819.1 657.6 817.0 657.3 815.0 657.0 812.9 656.8 810.9 656.6 808.8 656.4 806.8 656.3 804.7 656.2 802.6 656.2 800.6 656.2 798.5 656.3 796.5 656.3 794.4 656.5 792.4 656.7 790.4 656.9 788.3 657.2 786.3 657.5 784.3 657.9 782.3 658.3 780.3 658.8 778.3 659.4 776.4 660.1 774.5 660.8 772.7 661.7 770.9 662.6 769.2 663.7 767.6 664.9 766.0 666.2 764.5 667.7 763.2 669.4Z" style="stroke-width:var(--sw2)"/>
<polyline points="665.8,799.5 597,892.8 665.8,923.4"/>
<path d="M598.3 925.1L596.2 924.2 594.1 923.7 592.0 923.5 590.0 923.7 588.1 924.1 586.2 924.8 584.4 925.7 582.6 926.7 580.9 928.0 579.3 929.3 577.8 930.7 576.4 932.1 575.0 933.7 573.7 935.2 572.4 936.8 571.3 938.5 570.2 940.2 569.1 941.9 568.2 943.7 567.3 945.5 566.4 947.3 565.7 949.2 564.9 951.1 564.3 953.1 563.7 955.1 563.1 957.1 562.7 959.1 562.2 961.1 561.8 963.2 561.5 965.3 561.2 967.4 561.0 969.5 560.8 971.6 560.7 973.7 560.6 975.8 560.6 977.9 560.6 980.1 560.8 982.1 561.0 984.2 561.3 986.2 561.7 988.2 562.2 990.2 562.8 992.1 563.5 994.0 564.3 995.8 565.2 997.5 566.3 999.2 567.5 1000.8 568.8 1002.4 570.2 1003.8 571.8 1005.2 573.5 1006.4 575.4 1007.4 577.4 1008.1 579.4 1008.5 581.6 1008.5 583.9 1008.0 586.3 1006.9L584.1 1006.5 582.0 1005.9 580.1 1005.0 578.4 1003.9 576.9 1002.6 575.6 1001.1 574.4 999.5 573.3 997.7 572.4 995.9 571.7 994.0 571.0 992.0 570.4 990.1 569.9 988.1 569.6 986.0 569.3 984.0 569.1 982.0 569.0 979.9 568.9 977.9 569.0 975.8 569.1 973.8 569.3 971.7 569.6 969.6 569.9 967.6 570.3 965.5 570.7 963.5 571.2 961.5 571.8 959.5 572.4 957.4 573.0 955.5 573.7 953.5 574.4 951.5 575.2 949.6 576.0 947.7 576.8 945.9 577.7 944.0 578.7 942.3 579.7 940.5 580.8 938.9 581.9 937.2 583.2 935.7 584.5 934.2 585.9 932.8 587.4 931.5 589.0 930.3 590.8 929.1 592.6 928.1 594.6 927.1 596.6 926.2 598.3 925.1Z" style="stroke-width:var(--sw2)"/>
<path d="M818.8 926.5L820.9 924.8 822.9 923.6 824.9 922.8 826.9 922.4 828.8 922.3 830.6 922.5 832.5 923.0 834.2 923.7 835.9 924.7 837.6 925.8 839.2 927.1 840.8 928.4 842.3 929.9 843.8 931.4 845.2 933.0 846.6 934.5 847.9 936.2 849.1 937.8 850.3 939.5 851.4 941.2 852.5 942.9 853.6 944.7 854.6 946.5 855.5 948.3 856.4 950.1 857.2 952.0 857.9 953.9 858.7 955.8 859.3 957.7 859.9 959.7 860.5 961.6 861.0 963.6 861.4 965.6 861.8 967.7 862.1 969.7 862.4 971.8 862.6 973.9 862.7 976.0 862.9 978.1 862.9 980.2 862.9 982.3 862.8 984.5 862.6 986.6 862.4 988.7 862.1 990.7 861.6 992.7 861.1 994.7 860.5 996.6 859.7 998.4 858.8 1000.1 857.8 1001.8 856.7 1003.4 855.5 1004.8 854.0 1006.2 852.5 1007.4 850.8 1008.5 848.9 1009.5 846.9 1010.3 844.7 1010.9 842.5 1011.4 840.3 1011.6 838.1 1011.6 836.1 1011.4 834.3 1010.8L836.6 1010.8 838.7 1010.5 840.6 1009.9 842.5 1009.0 844.1 1007.8 845.6 1006.4 847.0 1004.8 848.3 1003.1 849.4 1001.2 850.4 999.3 851.2 997.3 852.0 995.3 852.6 993.3 853.1 991.3 853.5 989.3 853.8 987.3 854.0 985.3 854.1 983.3 854.1 981.3 854.0 979.3 853.9 977.2 853.7 975.2 853.4 973.2 853.0 971.2 852.5 969.1 852.0 967.1 851.5 965.1 850.9 963.1 850.2 961.1 849.5 959.1 848.8 957.1 848.0 955.1 847.2 953.1 846.3 951.2 845.4 949.2 844.5 947.3 843.5 945.5 842.4 943.6 841.3 941.8 840.2 940.1 839.0 938.5 837.7 936.8 836.4 935.3 835.0 933.9 833.5 932.5 832.0 931.2 830.4 930.0 828.7 928.9 827.0 927.9 825.1 927.1 823.2 926.5 821.1 926.2 818.8 926.5Z" style="stroke-width:var(--sw2)"/>
<path d="M575.5 946.7L576.6 948.6 577.8 950.2 579.1 951.9 580.4 953.5 581.8 955.0 583.1 956.6 584.5 958.1 585.9 959.6 587.3 961.1 588.7 962.5 590.2 963.9 591.6 965.3 593.1 966.7 594.6 968.1 596.1 969.4 597.7 970.7 599.2 972.0 600.8 973.3 602.4 974.5 603.9 975.8 605.6 977.0 607.2 978.1 608.8 979.3 610.5 980.4 612.1 981.6 613.8 982.6 615.5 983.7 617.2 984.8 618.9 985.8 620.7 986.8 622.4 987.8 624.2 988.7 626.0 989.6 627.7 990.6 629.5 991.4 631.3 992.3 633.2 993.2 635.0 994.0 636.8 994.8 638.7 995.6 640.5 996.3 642.4 997.1 644.3 997.8 646.2 998.5 648.1 999.2 650.0 999.8 651.9 1000.5 653.8 1001.1 655.8 1001.7 657.7 1002.2 659.6 1002.8 661.6 1003.3 663.6 1003.8 665.5 1004.3 667.5 1004.8 669.5 1005.2 671.5 1005.7 673.5 1006.1 675.5 1006.5 677.5 1006.8 679.5 1007.2 681.5 1007.5 683.5 1007.8 685.5 1008.1 687.5 1008.4 689.6 1008.6 691.6 1008.8 693.6 1009.0 695.7 1009.2 697.7 1009.4 699.8 1009.5 701.8 1009.7 703.8 1009.8 705.9 1009.9 707.9 1009.9 710.0 1010.0 712.0 1010.0 714.1 1010.0 716.1 1010.0 718.2 1010.0 720.2 1010.0 722.3 1009.9 724.3 1009.8 726.4 1009.7 728.4 1009.6 730.5 1009.4 732.5 1009.3 734.6 1009.1 736.6 1008.9 738.7 1008.7 740.7 1008.4 742.7 1008.2 744.7 1007.9 746.8 1007.6 748.8 1007.3 750.8 1006.9 752.8 1006.6 754.8 1006.2 756.8 1005.8 758.8 1005.4 760.8 1005.0 762.8 1004.5 764.8 1004.0 766.8 1003.5 768.8 1003.0 770.7 1002.5 772.7 1001.9 774.6 1001.4 776.6 1000.8 778.5 1000.2 780.4 999.5 782.4 998.9 784.3 998.2 786.2 997.5 788.1 996.8 790.0 996.1 791.9 995.3 793.7 994.6 795.6 993.8 797.4 993.0 799.3 992.2 801.1 991.3 802.9 990.5 804.7 989.6 806.5 988.7 808.3 987.7 810.1 986.8 811.9 985.8 813.6 984.8 815.3 983.8 817.1 982.8 818.8 981.8 820.5 980.7 822.2 979.6 823.8 978.5 825.5 977.4 827.2 976.3 828.8 975.1 830.4 973.9 832.0 972.7 833.6 971.5 835.2 970.3 836.7 969.0 838.3 967.7 839.8 966.4 841.3 965.1 842.8 963.8 844.3 962.4 845.7 961.0 847.2 959.6 848.6 958.2 849.9 956.3L850.5 958.3 851.1 960.5 851.5 962.7 851.7 964.8 851.8 966.9 851.7 968.9 851.5 970.9 851.1 972.8 850.6 974.7 850.0 976.5 849.2 978.3 848.3 980.0 847.4 981.7 846.3 983.3 845.1 984.9 843.9 986.5 842.6 988.0 841.2 989.5 839.7 990.9 838.2 992.3 836.7 993.7 835.1 995.1 833.5 996.4 831.9 997.7 830.3 998.9 828.7 1000.1 827.0 1001.3 825.3 1002.5 823.7 1003.7 822.0 1004.8 820.3 1005.9 818.5 1007.0 816.8 1008.0 815.1 1009.1 813.3 1010.1 811.5 1011.1 809.8 1012.0 808.0 1012.9 806.2 1013.9 804.4 1014.7 802.5 1015.6 800.7 1016.4 798.9 1017.3 797.0 1018.0 795.2 1018.8 793.3 1019.6 791.4 1020.3 789.5 1021.0 787.6 1021.7 785.7 1022.3 783.8 1023.0 781.9 1023.6 780.0 1024.2 778.0 1024.8 776.1 1025.3 774.1 1025.8 772.2 1026.4 770.2 1026.8 768.3 1027.3 766.3 1027.8 764.3 1028.2 762.3 1028.6 760.3 1029.0 758.3 1029.4 756.3 1029.8 754.3 1030.1 752.3 1030.4 750.3 1030.7 748.3 1031.0 746.3 1031.3 744.3 1031.6 742.2 1031.8 740.2 1032.0 738.2 1032.2 736.1 1032.4 734.1 1032.6 732.1 1032.7 730.0 1032.9 728.0 1033.0 726.0 1033.1 723.9 1033.2 721.9 1033.3 719.8 1033.3 717.8 1033.4 715.7 1033.4 713.7 1033.4 711.6 1033.4 709.6 1033.4 707.6 1033.4 705.5 1033.4 703.5 1033.3 701.4 1033.3 699.4 1033.2 697.4 1033.1 695.3 1033.0 693.3 1032.8 691.3 1032.7 689.3 1032.5 687.2 1032.4 685.2 1032.2 683.2 1032.0 681.2 1031.7 679.2 1031.5 677.2 1031.2 675.2 1031.0 673.2 1030.7 671.2 1030.3 669.2 1030.0 667.2 1029.7 665.3 1029.3 663.3 1028.9 661.3 1028.5 659.4 1028.0 657.4 1027.6 655.5 1027.1 653.5 1026.6 651.6 1026.1 649.7 1025.6 647.7 1025.0 645.8 1024.4 643.9 1023.8 642.0 1023.2 640.1 1022.6 638.2 1021.9 636.4 1021.2 634.5 1020.5 632.6 1019.7 630.8 1019.0 629.0 1018.2 627.1 1017.4 625.3 1016.5 623.5 1015.7 621.7 1014.8 619.9 1013.9 618.1 1012.9 616.3 1012.0 614.6 1011.0 612.8 1010.0 611.1 1008.9 609.4 1007.8 607.6 1006.7 605.9 1005.6 604.3 1004.5 602.6 1003.3 600.9 1002.1 599.2 1000.8 597.6 999.6 596.0 998.3 594.4 996.9 592.7 995.6 591.2 994.2 589.6 992.8 588.0 991.3 586.5 989.9 585.0 988.4 583.6 986.8 582.2 985.3 580.9 983.7 579.6 982.1 578.4 980.4 577.2 978.7 576.2 977.0 575.2 975.3 574.3 973.6 573.5 971.8 572.9 970.0 572.3 968.1 571.9 966.3 571.5 964.4 571.3 962.5 571.3 960.5 571.4 958.6 571.6 956.6 572.0 954.5 572.6 952.5 573.3 950.4 574.2 948.3 575.5 946.7Z"/>
<path d="M664.6 1037.0L665.0 1039.3 665.8 1041.2 666.7 1043.0 667.9 1044.5 669.3 1046.0 670.8 1047.3 672.4 1048.5 674.1 1049.7 675.8 1050.7 677.6 1051.7 679.4 1052.7 681.3 1053.6 683.2 1054.5 685.1 1055.4 687.0 1056.2 688.9 1056.9 690.9 1057.6 692.8 1058.2 694.8 1058.8 696.8 1059.4 698.8 1059.8 700.9 1060.3 702.9 1060.6 704.9 1060.9 707.0 1061.2 709.0 1061.4 711.1 1061.5 713.2 1061.5 715.2 1061.5 717.3 1061.5 719.3 1061.3 721.4 1061.1 723.4 1060.9 725.5 1060.6 727.5 1060.2 729.5 1059.8 731.5 1059.3 733.5 1058.7 735.5 1058.1 737.4 1057.5 739.4 1056.8 741.3 1056.0 743.2 1055.2 745.1 1054.4 747.0 1053.5 748.8 1052.5 750.6 1051.6 752.4 1050.5 754.2 1049.5 755.9 1048.3 757.5 1047.1 759.0 1045.8 760.4 1044.3 761.6 1042.8 762.7 1041.1 763.6 1039.2 764.2 1037.0L765.3 1039.2 766.1 1041.3 766.4 1043.4 766.3 1045.3 765.9 1047.2 765.2 1048.9 764.3 1050.6 763.1 1052.1 761.8 1053.6 760.3 1055.1 758.7 1056.4 757.1 1057.7 755.4 1059.0 753.7 1060.2 752.0 1061.3 750.2 1062.4 748.4 1063.4 746.6 1064.3 744.8 1065.2 743.0 1066.1 741.1 1066.8 739.2 1067.6 737.3 1068.2 735.4 1068.9 733.5 1069.4 731.5 1069.9 729.5 1070.4 727.6 1070.8 725.6 1071.1 723.6 1071.4 721.5 1071.6 719.5 1071.8 717.5 1071.9 715.4 1072.0 713.4 1072.0 711.3 1071.9 709.3 1071.8 707.2 1071.7 705.2 1071.5 703.1 1071.2 701.1 1070.9 699.1 1070.5 697.0 1070.0 695.0 1069.5 693.1 1069.0 691.1 1068.4 689.2 1067.7 687.2 1067.0 685.4 1066.2 683.5 1065.3 681.7 1064.4 679.9 1063.4 678.1 1062.4 676.4 1061.3 674.8 1060.2 673.2 1059.0 671.6 1057.7 670.1 1056.3 668.6 1054.9 667.2 1053.5 665.9 1052.0 664.6 1050.4 663.5 1048.7 662.7 1047.0 662.2 1045.2 662.0 1043.2 662.3 1041.3 663.1 1039.2 664.6 1037.0Z" style="stroke-width:var(--sw2)"/>
</g></defs>
<use href="#face" clip-path="url(#cv)" fill="none" stroke="#000" stroke-width="3.6" stroke-linejoin="miter" stroke-miterlimit="4" style="--sw2:3.4px"/>
</svg>
<div class="hdr" style="left:4px;top:67px;width:36px;height:12px"></div>
<svg class="a" style="left:7px;top:69px" width="12" height="8"><path d="M1 1 L4.5 4 L1 7Z M6 1 L9.5 4 L6 7Z" fill="#bdbdbd"/></svg>
<div class="a" style="left:4px;top:79px;width:36px;height:1px;background:#222"></div>
<div class="a" style="left:4px;top:80px;width:35px;height:738px;background:#d6d6d6;border-left:1px solid #5a5a5a;border-right:1px solid #5a5a5a;border-bottom:1px solid #5a5a5a;box-shadow:inset 1px 1px 0 #ececec"></div>
<div class="grip" style="left:10px;top:84px;width:26px;height:3px"></div>
<svg class="a" style="left:4px;top:80px" width="36" height="738" viewBox="4 80 36 738">
<defs>
<linearGradient id="gg" x1="0" x2="1"><stop offset="0" stop-color="#fff"/><stop offset="1" stop-color="#111"/></linearGradient>
<linearGradient id="gv" x1="0" y1="0" x2="0" y2="1"><stop offset="0" stop-color="#fafafa"/><stop offset="1" stop-color="#9a9a9a"/></linearGradient>
</defs>
<g stroke="#f6f6f6" stroke-width="1"><line x1="8" y1="182" x2="36" y2="182"/><line x1="8" y1="354.5" x2="36" y2="354.5"/><line x1="8" y1="484.5" x2="36" y2="484.5"/><line x1="8" y1="571.5" x2="36" y2="571.5"/><line x1="8" y1="618" x2="36" y2="618"/><line x1="8" y1="706" x2="36" y2="706"/><line x1="8" y1="757" x2="36" y2="757"/><line x1="8" y1="772.5" x2="36" y2="772.5"/><line x1="8" y1="793" x2="36" y2="793"/></g>
<g fill="#222">
<!-- selection -->
<path d="M17 99 L17 112 L20 109.5 L22.5 115 L24.5 114 L22 108.5 L26 108.5Z"/>
<!-- direct selection bg -->
<rect x="10.5" y="119" width="23" height="18" rx="2.5" fill="#cacaca" stroke="#6a6a6a"/>
<path d="M18 121 L18 134 L21 131.5 L23.5 137 L25.5 136 L23 130.5 L27 130.5Z" fill="#222" stroke="#fff" stroke-width="0.6"/>
<path d="M32 135 L34 133 L34 137 L30 137Z" fill="#222"/>
<!-- magic wand -->
<path d="M19 146 L29 156" stroke="#222" stroke-width="1.6"/>
<path d="M15 144 L19 148 M19 144 L15 148 M17 142 L17 150 M13 146 L21 146" stroke="#444" stroke-width="0.8"/>
<!-- lasso -->
<path d="M14 170 C12 164 20 161 26 163 C31 165 29 171 22 171 C17 171 15 172 17 175" fill="none" stroke="#333" stroke-width="1.2"/>
<path d="M22 167 L22 177 L24.5 175 L29 175Z" fill="#fff" stroke="#222" stroke-width="0.8"/>
<!-- pen -->
<path d="M21 186 L16 196 L18 199 L24 199 L26 196Z" fill="#f0f0f0" stroke="#222" stroke-width="1"/>
<path d="M21 190 L21 196" stroke="#222" stroke-width="1"/><rect x="17" y="200" width="8" height="3" fill="#222"/>
<path d="M28 186 L28 192 M25 189 L31 189" stroke="#222" stroke-width="1.2"/>
<path d="M32 201 L34 199 L34 203 L30 203Z"/>
<!-- type -->
<text x="14" y="224" font-family="Liberation Serif" font-size="19" fill="#111" stroke="#111" stroke-width="0.3">T</text>
<path d="M32 223 L34 221 L34 225 L30 225Z"/>
<!-- line -->
<path d="M13 230 L29 245" stroke="#222" stroke-width="1.4"/>
<path d="M32 244 L34 242 L34 246 L30 246Z"/>
<!-- ellipse -->
<ellipse cx="21" cy="257.5" rx="7.5" ry="5.5" fill="url(#gv)" stroke="#444" stroke-width="0.8"/>
<path d="M32 265 L34 263 L34 267 L30 267Z"/>
<!-- brush -->
<path d="M31 272 L21 281" stroke="#333" stroke-width="1.6"/><path d="M14.5 285.5 C16 281 19 278.5 22 279.5 L23 281.5 C21 285 18 286.5 14.5 285.5Z" fill="#ddd" stroke="#333" stroke-width="0.9"/>
<!-- pencil -->
<path d="M14 308 L15.5 302.5 L26 292 L30 296 L19.5 306.5Z" fill="#f6f6f6" stroke="#222" stroke-width="1"/><path d="M14 308 L15 304.5 L17.5 307Z" fill="#222"/><path d="M24 294 L28 298" stroke="#222" stroke-width="0.8"/>
<path d="M32 308 L34 306 L34 310 L30 310Z"/>
<!-- blob brush -->
<path d="M13 318 L13 328 L25 328 L28 322 L26 317Z" fill="#f4f4f4" stroke="#222" stroke-width="1"/>
<path d="M30 314 L20 324" stroke="#333" stroke-width="1.8"/>
<!-- eraser -->
<path d="M14.5 346.5 L22 338.5 L30 338.5 L23 346.5Z" fill="#f8f8f8" stroke="#333" stroke-width="1"/><path d="M14.5 346.5 L23 346.5 L23 349 L14.5 349Z" fill="#bbb" stroke="#333" stroke-width="0.8"/><path d="M23 346.5 L30 338.5 L30 341 L23 349Z" fill="#888" stroke="#333" stroke-width="0.8"/>
<path d="M32 350 L34 348 L34 352 L30 352Z"/>
<!-- rotate -->
<path d="M27 363 A7 7 0 1 1 17 362" fill="none" stroke="#333" stroke-width="1.3" stroke-dasharray="1.5 1.5"/><path d="M16 359 L20 362 L16 365Z" fill="#222"/>
<path d="M32 374 L34 372 L34 376 L30 376Z"/>
<!-- scale -->
<rect x="14" y="381" width="10" height="8" fill="#f4f4f4" stroke="#333"/><rect x="20" y="387" width="7" height="7" fill="none" stroke="#555"/><path d="M16 383 L21 387" stroke="#222" stroke-width="1"/>
<path d="M32 394 L34 392 L34 396 L30 396Z"/>
<!-- warp -->
<path d="M13 411 C17 404 22 412 28 404" fill="none" stroke="#555" stroke-width="2.2"/><path d="M17 404 L30 416" stroke="#333" stroke-width="1" stroke-dasharray="1.5 1"/><circle cx="24" cy="410" r="1.6" fill="#fff" stroke="#222"/>
<path d="M32 415 L34 413 L34 417 L30 417Z"/>
<!-- free transform -->
<rect x="17.5" y="424.5" width="11" height="10" fill="none" stroke="#222" stroke-dasharray="2 1.5"/><path d="M14 424 L14 434 L21 430Z" fill="#222"/>
<!-- shape builder -->
<ellipse cx="19" cy="449" rx="6" ry="4" fill="#f4f4f4" stroke="#333"/><path d="M23 448 L23 457 L25.5 455 L29 457Z" fill="#fff" stroke="#222" stroke-width="0.8"/>
<path d="M32 457 L34 455 L34 459 L30 459Z"/>
<!-- perspective grid -->
<path d="M14 463 L14 478 L29 478 M14 463 L20 464 L20 478 M14 468 L24 469 M14 473 L27 474 M24 466 L24 478" fill="none" stroke="#444" stroke-width="1"/>
<path d="M32 477 L34 475 L34 479 L30 479Z"/>
<!-- mesh -->
<rect x="14.5" y="491.5" width="14" height="11" fill="#f8f8f8" stroke="#333"/><path d="M15 497 C19 493 23 501 28 496 M21 492 C19 496 23 499 20 502" fill="none" stroke="#333" stroke-width="0.8"/>
<!-- gradient -->
<rect x="14.5" y="512.5" width="15" height="11" fill="url(#gg)" stroke="#333"/>
<!-- eyedropper -->
<path d="M28 531 L17 543 L15 547 L19 545 L30 533Z" fill="#f4f4f4" stroke="#222" stroke-width="1"/><path d="M26 530 L31 535" stroke="#222" stroke-width="2.5"/>
<path d="M32 546 L34 544 L34 548 L30 548Z"/>
<!-- blend -->
<rect x="14.5" y="552.5" width="5" height="5" fill="#fff" stroke="#555"/><circle cx="25.5" cy="563.5" r="3.5" fill="url(#gv)" stroke="#444"/><path d="M19 559 L23 561" stroke="#777" stroke-dasharray="1 1"/>
<!-- symbol sprayer -->
<rect x="18.5" y="579.5" width="9" height="10" fill="#f4f4f4" stroke="#333"/><circle cx="23" cy="585" r="2" fill="none" stroke="#333"/><rect x="21" y="576" width="4" height="3" fill="#444"/><path d="M13 576 L17 576 M13 579 L16 579" stroke="#666" stroke-dasharray="1 1"/>
<path d="M32 590 L34 588 L34 592 L30 592Z"/>
<!-- graph -->
<path d="M13.5 597 L13.5 611 L29 611" fill="none" stroke="#333"/><rect x="16" y="604" width="3" height="7" fill="#555"/><rect x="20" y="601" width="3" height="10" fill="#555"/><rect x="24" y="598" width="3" height="13" fill="#555"/>
<path d="M32 612 L34 610 L34 614 L30 614Z"/>
<!-- artboard -->
<rect x="16.5" y="625.5" width="9" height="9" fill="none" stroke="#222" stroke-width="1.2"/><path d="M14 625 L28 625 M14 635 L28 635 M16 623 L16 637 M26 623 L26 637" stroke="#888" stroke-width="0.6" stroke-dasharray="1 1"/>
<!-- slice -->
<path d="M30 645 L16 657 L13 659 L18 657 L26 652Z" fill="#f4f4f4" stroke="#222"/><path d="M20 646 L26 655" stroke="#222"/>
<path d="M32 659 L34 657 L34 661 L30 661Z"/>
<!-- hand -->
<path d="M15 672 L15 666 C15 664 18 664 18 666 L18 669 L18 664 C18 662 21 662 21 664 L21 668 L21 663.5 C21 661.5 24 661.5 24 663.5 L24 668 L24 665 C24 663 27 663 27 665 L27 674 C27 679 24 681 20 681 C17 681 15 678 13 675 L12 672 C12 670 14 670 15 672Z" fill="#fff" stroke="#222" stroke-width="0.9"/>
<path d="M32 680 L34 678 L34 682 L30 682Z"/>
<!-- zoom -->
<circle cx="19" cy="691" r="5" fill="#f4f4f4" stroke="#222" stroke-width="1.3"/><path d="M22.5 694.5 L28 700" stroke="#111" stroke-width="2.2"/>
<!-- default/swap -->
<rect x="11.5" y="712.5" width="6" height="6" fill="#fff" stroke="#222"/><rect x="14.5" y="715.5" width="6" height="6" fill="#222"/><rect x="16" y="717" width="3" height="3" fill="#fff"/>
<path d="M27 712 C31 712 33 714 33 718 M25 712 L28 710 L28 714Z M33 720 L31 717 L35 717Z" fill="#222" stroke="#222" stroke-width="1"/>
<!-- fill/stroke -->
<rect x="18.5" y="735.5" width="16" height="16" fill="#000" stroke="#aaa"/><rect x="23" y="740" width="7" height="7" fill="#fff" stroke="#999" stroke-width="0.5"/><rect x="25" y="742" width="3" height="3" fill="#000"/>
<rect x="10.5" y="727.5" width="15.5" height="15.5" fill="#fff" stroke="#111"/>
<!-- modes -->
<rect x="8.5" y="760.5" width="27" height="8.5" fill="#fff" stroke="#888"/><rect x="17.5" y="760.5" width="9" height="8.5" fill="url(#gg)" stroke="#888"/><path d="M28 768.5 L35 761" stroke="#d01010" stroke-width="1.4"/>
<!-- draw mode -->
<circle cx="19.5" cy="781" r="4.5" fill="#fff" stroke="#222"/><rect x="20.5" y="782.5" width="6" height="6" fill="#888" stroke="#222"/>
<!-- screen mode -->
<rect x="18" y="799" width="10" height="5" fill="#f4f4f4" stroke="#555"/><rect x="14" y="803" width="10" height="5" fill="#fff" stroke="#555"/>
</g>
</svg>

<div class="hdr" style="left:1665px;top:67px;width:252px;height:12px"></div>
<div class="a" style="left:1665px;top:79px;width:252px;height:1px;background:#1e1e1e"></div>
<svg class="a" style="left:1689px;top:69px" width="10" height="8"><path d="M4 1 L0.5 4 L4 7Z M9 1 L5.5 4 L9 7Z" fill="#c8c8c8"/></svg>
<svg class="a" style="left:1904px;top:69px" width="10" height="8"><path d="M1 1 L4.5 4 L1 7Z M6 1 L9.5 4 L6 7Z" fill="#c8c8c8"/></svg>
<div class="a" style="left:1665px;top:80px;width:35px;height:43px;background:#d6d6d6;border:1px solid #5e5e5e;box-shadow:inset 1px 1px 0 #eee"></div>
<div class="a" style="left:1665px;top:123px;width:35px;height:105px;background:#d6d6d6;border:1px solid #5e5e5e;box-shadow:inset 1px 1px 0 #eee"></div>
<div class="a" style="left:1665px;top:228px;width:35px;height:104px;background:#d6d6d6;border:1px solid #5e5e5e;box-shadow:inset 1px 1px 0 #eee"></div>
<div class="a" style="left:1665px;top:332px;width:35px;height:104px;background:#d6d6d6;border:1px solid #5e5e5e;box-shadow:inset 1px 1px 0 #eee"></div>
<div class="a" style="left:1665px;top:436px;width:35px;height:73px;background:#d6d6d6;border:1px solid #5e5e5e;box-shadow:inset 1px 1px 0 #eee"></div>
<div class="a" style="left:1700px;top:80px;width:1px;height:995px;background:#555"></div>
<div class="grip" style="left:1670px;top:85px;width:25px;height:3px"></div>
<div class="grip" style="left:1670px;top:128px;width:25px;height:3px"></div>
<div class="grip" style="left:1670px;top:233px;width:25px;height:3px"></div>
<div class="grip" style="left:1670px;top:337px;width:25px;height:3px"></div>
<div class="grip" style="left:1670px;top:441px;width:25px;height:3px"></div>

<svg class="a" style="left:1665px;top:80px" width="35" height="430" viewBox="1665 80 35 430">
<defs>
<linearGradient id="dg1" x1="0" x2="1"><stop offset="0" stop-color="#fff"/><stop offset="1" stop-color="#111"/></linearGradient>
<linearGradient id="dg2" x1="0" y1="0" x2="1" y2="1"><stop offset="0" stop-color="#444"/><stop offset="1" stop-color="#111"/></linearGradient>
</defs>
<!-- play -->
<rect x="1674.5" y="99.5" width="16" height="12" fill="#eee" stroke="#222"/><path d="M1678 101 L1688 105.5 L1678 110Z" fill="url(#dg2)"/>
<!-- align -->
<rect x="1674.5" y="142" width="1.2" height="14" fill="#222"/><rect x="1677" y="143" width="7" height="5" fill="#777"/><rect x="1677" y="150" width="11" height="5" fill="#111"/>
<!-- transform -->
<rect x="1677" y="173" width="12" height="12" fill="#fafafa" stroke="#555" stroke-width="0.6"/><g fill="#111"><rect x="1675" y="171" width="3" height="3"/><rect x="1681.5" y="171" width="3" height="3"/><rect x="1688" y="171" width="3" height="3"/><rect x="1675" y="177.5" width="3" height="3"/><rect x="1688" y="177.5" width="3" height="3"/><rect x="1675" y="184" width="3" height="3"/><rect x="1681.5" y="184" width="3" height="3"/><rect x="1688" y="184" width="3" height="3"/></g>
<!-- pathfinder -->
<rect x="1675" y="202" width="8" height="8" fill="#555"/><rect x="1679" y="206" width="9" height="9" fill="#111"/><rect x="1679" y="206" width="4" height="4" fill="#ddd" stroke="#111" stroke-width="0.6"/>
<!-- character -->
<text x="1674.5" y="259" font-family="Liberation Sans" font-size="15" fill="#222" stroke="#222" stroke-width="0.4">A</text><rect x="1689" y="245" width="1.3" height="16" fill="#111"/>
<!-- paragraph -->
<text x="1676" y="291" font-family="Liberation Sans" font-size="16" font-weight="bold" fill="#222">¶</text>
<!-- opentype -->
<text x="1673" y="319" font-family="Liberation Serif" font-style="italic" font-size="15" fill="#222">O</text><text x="1682" y="323" font-family="Liberation Serif" font-size="11" fill="#222">T</text>
<!-- brushes -->
<rect x="1678.5" y="356.5" width="7" height="6" fill="#fff" stroke="#222" stroke-width="1.3"/><path d="M1679 356 L1676 348 M1682 356 L1682 345 M1685 356 L1689 349" stroke="#222" stroke-width="1.5"/><circle cx="1676" cy="348" r="1.8" fill="#222"/><circle cx="1689" cy="349" r="2" fill="#222"/>
<!-- stroke -->
<rect x="1675" y="380" width="16" height="1" fill="#555"/><rect x="1675" y="384" width="16" height="1.5" fill="#333"/><rect x="1675" y="388" width="16" height="2" fill="#222"/><rect x="1675" y="392" width="16" height="2.5" fill="#111"/>
<!-- gradient -->
<rect x="1675.5" y="410.5" width="15" height="11" fill="url(#dg1)" stroke="#222"/>
<!-- links -->
<path d="M1675 455 C1673 458 1677 461 1680 460 L1683 463 C1681 466 1685 469 1688 467 C1691 465 1690 462 1687 462" fill="none" stroke="#222" stroke-width="1.4"/><ellipse cx="1679" cy="458" rx="3.5" ry="2.5" fill="none" stroke="#222" stroke-width="1.2"/><ellipse cx="1686" cy="465" rx="3.5" ry="2.5" fill="none" stroke="#222" stroke-width="1.2"/>
<!-- ... -->
<rect x="1677.5" y="485.5" width="13" height="12" fill="#2a2a2a"/><circle cx="1679.5" cy="484.5" r="4" fill="#8a8a8a" stroke="#333" stroke-width="0.8"/><circle cx="1684.5" cy="490.5" r="4.5" fill="#ddd" stroke="#fff" stroke-width="1.2"/><circle cx="1684.5" cy="490.5" r="2.5" fill="#fff"/>
</svg>

<div class="a" style="left:1701px;top:80px;width:214px;height:995px;background:#d6d6d6"></div>
<div class="a" style="left:1915px;top:80px;width:1px;height:995px;background:#4e4e4e"></div>
<div class="a" style="left:1916px;top:35px;width:1px;height:1045px;background:#e8e8e8"></div>
<!-- ============ NAVIGATOR ============ -->
<div class="tabbar" style="left:1701px;top:80px;width:214px;height:18px"></div>
<div class="tabon" style="left:1701px;top:80px;width:74px;height:18px"></div>
<div class="taboff" style="left:1775px;top:80px;width:39px;height:18px"></div>
<div class="ptab" style="left:1708.5px;top:84px">NAVIGATOR</div>
<div class="ptab" style="left:1782px;top:84px;color:#3a3a3a">INFO</div>
<svg class="pmenu" style="left:1897px;top:85px"><path d="M0 2 L4 2 L2 5Z" fill="#333"/><g fill="#333"><rect x="5" y="0" width="9" height="1.2"/><rect x="5" y="2.6" width="9" height="1.2"/><rect x="5" y="5.2" width="9" height="1.2"/><rect x="5" y="7.8" width="9" height="1.2"/></g></svg>
<div class="a" style="left:1703px;top:98px;width:211px;height:1px;background:#111"></div>
<div class="a" style="left:1703px;top:99px;width:211px;height:236px;background:#fff"></div>
<div class="a" style="left:1708px;top:116px;width:201px;height:202px;border:1px solid #111"></div>
<svg class="a" style="left:1704px;top:100px" width="209" height="234" viewBox="1704 100 209 234">
<g transform="translate(1753 141) scale(0.0492) translate(-40 -88)"><use href="#face" fill="none" stroke="#a8a8a8" stroke-width="19" style="--sw2:19px"/></g></svg>
<div class="a" style="left:1752px;top:140px;width:80px;height:49px;border:2px solid #f23b3b"></div>
<div class="a" style="left:1703px;top:335px;width:211px;height:1px;background:#111"></div>
<div class="a" style="left:1704px;top:337px;width:48px;height:15px;background:#fff"></div>
<div class="t" style="left:1715px;top:341px;font-size:10.3px;color:#111">400%</div>
<svg class="a" style="left:1772px;top:338px" width="130" height="14"><path d="M2 8 L6.5 4 L11 8Z" fill="#f2f2f2" stroke="#222" stroke-width="0.9"/><rect x="1" y="8" width="10" height="1.2" fill="#222"/>
<rect x="22" y="5" width="75" height="1.6" fill="#111"/><path d="M79 12.5 L82.5 8 L86 12.5Z" fill="#e4e2d8" stroke="#8a8678" stroke-width="0.8"/>
<path d="M105 9 L110 4 L113 7 L116 3.5 L122 9Z" fill="#f4f4f4" stroke="#222" stroke-width="0.9"/><rect x="104" y="9" width="19" height="1.2" fill="#222"/></svg>
<svg class="a" style="left:1903px;top:343px" width="10" height="9"><g fill="#8e8e8e"><rect x="8" y="0" width="1" height="1"/><rect x="6" y="2" width="1" height="1"/><rect x="8" y="2" width="1" height="1"/><rect x="4" y="4" width="1" height="1"/><rect x="6" y="4" width="1" height="1"/><rect x="8" y="4" width="1" height="1"/><rect x="2" y="6" width="1" height="1"/><rect x="4" y="6" width="1" height="1"/><rect x="6" y="6" width="1" height="1"/><rect x="8" y="6" width="1" height="1"/><rect x="0" y="8" width="1" height="1"/><rect x="2" y="8" width="1" height="1"/><rect x="4" y="8" width="1" height="1"/><rect x="6" y="8" width="1" height="1"/><rect x="8" y="8" width="1" height="1"/></g></svg>
<div class="sep" style="left:1701px;top:353px;width:214px;height:3px"></div>
<!-- ============ COLOR ============ -->
<div class="tabbar" style="left:1701px;top:356px;width:214px;height:17px"></div>
<div class="tabon" style="left:1701px;top:356px;width:58px;height:17px"></div>
<div class="taboff" style="left:1759px;top:356px;width:65px;height:17px"></div>
<div class="taboff" style="left:1823px;top:356px;width:53px;height:17px"></div>
<svg class="a" style="left:1705px;top:359.5px" width="7" height="10"><path d="M1 4 L3.5 1.5 L6 4 M1 6 L3.5 8.5 L6 6" fill="none" stroke="#222" stroke-width="1.1"/></svg>
<div class="ptab" style="left:1714.5px;top:360px">COLOR</div>
<div class="ptab" style="left:1766px;top:360px;color:#3a3a3a">SWATCHES</div>
<div class="ptab" style="left:1829px;top:360px;color:#3a3a3a;width:46px;overflow:hidden">SYMBOLS</div>
<svg class="pmenu" style="left:1897px;top:360px"><path d="M0 2 L4 2 L2 5Z" fill="#333"/><g fill="#333"><rect x="5" y="0" width="9" height="1.2"/><rect x="5" y="2.6" width="9" height="1.2"/><rect x="5" y="5.2" width="9" height="1.2"/><rect x="5" y="7.8" width="9" height="1.2"/></g></svg>
<div class="a" style="left:1717px;top:389px;width:19px;height:19px;background:#000;box-shadow:0 0 0 1px #f0f0f0"></div>
<div class="a" style="left:1722px;top:394px;width:9px;height:9px;background:#d6d6d6;border:1px solid #fff"></div>
<div class="a" style="left:1707px;top:379px;width:20px;height:20px;background:#fff;border:1px solid #111;box-shadow:0 0 0 1px #f4f4f4"></div>
<div class="t" style="left:1745px;top:380px;font-size:10px">C</div>
<div class="t" style="left:1744px;top:398px;font-size:10px">M</div>
<div class="t" style="left:1745.5px;top:416px;font-size:10px">Y</div>
<div class="t" style="left:1745.5px;top:434px;font-size:10px">K</div>
<div class="a" style="left:1756px;top:380px;width:103px;height:8px;border:1px solid #111;background:linear-gradient(90deg,#fff,#00aeef);box-shadow:0 1px 0 #fff"></div>
<div class="a" style="left:1756px;top:398px;width:103px;height:8px;border:1px solid #111;background:linear-gradient(90deg,#fff,#ec008c);box-shadow:0 1px 0 #fff"></div>
<div class="a" style="left:1756px;top:416px;width:103px;height:8px;border:1px solid #111;background:linear-gradient(90deg,#fff,#fff200);box-shadow:0 1px 0 #fff"></div>
<div class="a" style="left:1756px;top:434px;width:103px;height:8px;border:1px solid #111;background:linear-gradient(90deg,#fff,#231f20);box-shadow:0 1px 0 #fff"></div>
<svg class="a" style="left:1752px;top:387px" width="12" height="60"><g fill="#e2dfd2" stroke="#8c887a" stroke-width="0.8"><path d="M1 6 L5 1 L9 6Z"/><path d="M1 24 L5 19 L9 24Z"/><path d="M1 42 L5 37 L9 42Z"/><path d="M1 60 L5 55 L9 60Z" transform="translate(0,-1)"/></g></svg>
<div class="a" style="left:1864px;top:376px;width:33px;height:16px;background:#fff;box-shadow:0 0 0 1px #ececec"></div>
<div class="a" style="left:1864px;top:394px;width:33px;height:16px;background:#fff;box-shadow:0 0 0 1px #ececec"></div>
<div class="a" style="left:1864px;top:412px;width:33px;height:16px;background:#fff;box-shadow:0 0 0 1px #ececec"></div>
<div class="a" style="left:1864px;top:430px;width:33px;height:16px;background:#fff;box-shadow:0 0 0 1px #ececec"></div>
<div class="t" style="left:1869px;top:380px;font-size:10px">0</div>
<div class="t" style="left:1869px;top:398px;font-size:10px">0</div>
<div class="t" style="left:1869px;top:416px;font-size:10px">0</div>
<div class="t" style="left:1869px;top:434px;font-size:10px">0</div>
<div class="t" style="left:1899px;top:380px;font-size:10px">%</div>
<div class="t" style="left:1899px;top:398px;font-size:10px">%</div>
<div class="t" style="left:1899px;top:416px;font-size:10px">%</div>
<div class="t" style="left:1899px;top:434px;font-size:10px">%</div>
<div class="a" style="left:1706px;top:449px;width:200px;height:17px;border:1px solid #111;overflow:hidden;box-shadow:0 0 0 1px #f0f0f0">
 <div class="a" style="left:15px;top:0;width:170px;height:15px;background:linear-gradient(90deg,#ed1c24 0%,#f7941d 10%,#fff200 20%,#8dc63f 33%,#00a651 43%,#00aeef 55%,#2e3192 66%,#92278f 78%,#ec008c 88%,#ed1c24 100%)"></div>
 <div class="a" style="left:15px;top:0;width:170px;height:15px;background:linear-gradient(rgba(255,255,255,0.85),rgba(255,255,255,0) 45%,rgba(0,0,0,0) 55%,rgba(0,0,0,0.95))"></div>
 <div class="a" style="left:0;top:0;width:15px;height:15px;background:#fff"></div>
 <svg class="a" style="left:0;top:0" width="15" height="15"><line x1="0" y1="15" x2="15" y2="0" stroke="#d7141a" stroke-width="1.8"/></svg>
 <div class="a" style="left:185px;top:0;width:14px;height:7px;background:#fff"></div>
 <div class="a" style="left:185px;top:7px;width:14px;height:8px;background:#000"></div>
</div>
<div class="sep" style="left:1701px;top:474px;width:214px;height:3px"></div>
<!-- ============ APPEARANCE ============ -->
<div class="tabbar" style="left:1701px;top:477px;width:214px;height:17px"></div>
<div class="tabon" style="left:1701px;top:477px;width:79px;height:17px"></div>
<div class="taboff" style="left:1780px;top:477px;width:95px;height:17px"></div>
<div class="ptab" style="left:1708px;top:481px">APPEARANCE</div>
<div class="ptab" style="left:1787px;top:481px;color:#3a3a3a">GRAPHIC STYLES</div>
<svg class="pmenu" style="left:1897px;top:481px"><path d="M0 2 L4 2 L2 5Z" fill="#333"/><g fill="#333"><rect x="5" y="0" width="9" height="1.2"/><rect x="5" y="2.6" width="9" height="1.2"/><rect x="5" y="5.2" width="9" height="1.2"/><rect x="5" y="7.8" width="9" height="1.2"/></g></svg>
<div class="a" style="left:1703px;top:495px;width:211px;height:1px;background:#111"></div>
<div class="a" style="left:1898px;top:496px;width:15px;height:236px;background:#ececec"></div>
<div class="a" style="left:1901px;top:503px;width:0;height:0;border-left:4px solid transparent;border-right:4px solid transparent;border-bottom:4px solid #a8a8a8"></div>
<div class="a" style="left:1901px;top:722px;width:0;height:0;border-left:4px solid transparent;border-right:4px solid transparent;border-top:4px solid #a8a8a8"></div>
<div class="a" style="left:1705px;top:498px;width:20px;height:20px;background:#fff;border:1px solid #111;box-shadow:inset 0 0 0 1px #ddd"></div>
<div class="t" style="left:1737px;top:503px;font-size:10px;font-weight:bold">No Selection</div>
<div class="a" style="left:1703px;top:519px;width:195px;height:1px;background:#111"></div>
<div class="a" style="left:1703px;top:520px;width:195px;height:24px;border-bottom:1px solid #f4f4f4"></div>
<div class="a" style="left:1703px;top:544px;width:195px;height:24px;border-bottom:1px solid #f4f4f4"></div>
<div class="a" style="left:1724px;top:520px;width:1px;height:72px;background:#111"></div>
<div class="a" style="left:1707px;top:523px;width:13px;height:18px;border:1px solid #f0f0f0;border-right-color:#c4c4c4;border-bottom-color:#c4c4c4"></div>
<div class="a" style="left:1707px;top:547px;width:13px;height:18px;border:1px solid #f0f0f0;border-right-color:#c4c4c4;border-bottom-color:#c4c4c4"></div>
<div class="a" style="left:1707px;top:571px;width:13px;height:18px;border:1px solid #f0f0f0;border-right-color:#c4c4c4;border-bottom-color:#c4c4c4"></div>
<svg class="a" style="left:1706px;top:526px" width="16" height="60"><g><ellipse cx="7.8" cy="6" rx="5.6" ry="3.4" fill="#fff" stroke="#111" stroke-width="1"/><circle cx="7.8" cy="6" r="2.4" fill="#111"/></g><g transform="translate(0,24)"><ellipse cx="7.8" cy="6" rx="5.6" ry="3.4" fill="#fff" stroke="#111" stroke-width="1"/><circle cx="7.8" cy="6" r="2.4" fill="#111"/></g><g transform="translate(0,48)"><ellipse cx="7.8" cy="6" rx="5.6" ry="3.4" fill="#eee" stroke="#8a8a8a" stroke-width="1"/><circle cx="7.8" cy="6" r="2.4" fill="#8a8a8a"/></g></svg>
<svg class="a" style="left:1727px;top:526px" width="9" height="40"><path d="M1 1 L7 6 L1 11Z" fill="#aaa" stroke="#111" stroke-width="1.2"/><path d="M1 25 L7 30 L1 35Z" fill="#aaa" stroke="#111" stroke-width="1.2"/></svg>
<div class="t lnk" style="left:1738px;top:527px;font-size:10.3px;padding-bottom:1px">Stroke:</div>
<div class="a" style="left:1783px;top:523px;width:18px;height:18px;border:1px solid #111;background:#000;box-shadow:inset 0 0 0 1px #ddd"></div>
<div class="a" style="left:1785px;top:525px;width:14px;height:14px;background:#000"></div>
<div class="t" style="left:1819px;top:527px;font-size:10.3px">1 pt</div>
<div class="t" style="left:1737px;top:551px;font-size:10.3px">Fill:</div>
<div class="a" style="left:1783px;top:547px;width:18px;height:18px;border:1px solid #111;background:#fff;box-shadow:inset 0 0 0 1px #eee"></div>
<div class="a" style="left:1785px;top:549px;width:14px;height:14px;border:1px solid #111;background:#fff"></div>
<div class="t lnk" style="left:1738px;top:574px;font-size:10.3px;padding-bottom:1px">Opacity:</div>
<div class="t" style="left:1783px;top:575px;font-size:9.7px">Default</div>
<div class="a" style="left:1703px;top:591px;width:195px;height:1px;background:#111"></div>
<div class="a" style="left:1703px;top:732px;width:195px;height:1px;background:#111"></div>
<svg class="a" style="left:1710px;top:733px" width="200" height="17">
<rect x="4.5" y="3.5" width="9" height="9" fill="#555" stroke="#444"/><rect x="7" y="6" width="4" height="4" fill="#bbb"/>
<rect x="38.5" y="3.5" width="9" height="9" fill="#fafafa" stroke="#333"/>
<text x="69" y="13" font-family="Liberation Serif" font-style="italic" font-weight="bold" font-size="12" fill="#222">fx</text><path d="M81 12 L83 10 L83 14 L79 14Z" fill="#222"/>
<circle cx="113" cy="8" r="4" fill="none" stroke="#333" stroke-width="1.3"/><line x1="110.5" y1="5.5" x2="115.5" y2="10.5" stroke="#333" stroke-width="1.3"/>
<rect x="138.5" y="3.5" width="9" height="9" fill="#eee" stroke="#aaa"/><rect x="141" y="8" width="4" height="3" fill="#888"/>
<path d="M169 5 L177 5 L176 13 L170 13Z" fill="#f2f2f2" stroke="#999"/><rect x="168" y="3" width="10" height="2" fill="#bbb"/>
<g fill="#8e8e8e"><rect x="196" y="6" width="1" height="1"/><rect x="194" y="8" width="1" height="1"/><rect x="196" y="8" width="1" height="1"/><rect x="192" y="10" width="1" height="1"/><rect x="194" y="10" width="1" height="1"/><rect x="196" y="10" width="1" height="1"/><rect x="190" y="12" width="1" height="1"/><rect x="192" y="12" width="1" height="1"/><rect x="194" y="12" width="1" height="1"/><rect x="196" y="12" width="1" height="1"/></g>
</svg>
<div class="sep" style="left:1701px;top:751px;width:214px;height:3px"></div>
<!-- ============ TRANSPARENCY ============ -->
<div class="tabbar" style="left:1701px;top:754px;width:214px;height:16px"></div>
<div class="tabon" style="left:1701px;top:754px;width:104px;height:16px"></div>
<svg class="a" style="left:1705px;top:757px" width="7" height="10"><path d="M1 4 L3.5 1.5 L6 4 M1 6 L3.5 8.5 L6 6" fill="none" stroke="#222" stroke-width="1.1"/></svg>
<div class="ptab" style="left:1714.5px;top:757.5px">TRANSPARENCY</div>
<svg class="pmenu" style="left:1897px;top:757px"><path d="M0 2 L4 2 L2 5Z" fill="#333"/><g fill="#333"><rect x="5" y="0" width="9" height="1.2"/><rect x="5" y="2.6" width="9" height="1.2"/><rect x="5" y="5.2" width="9" height="1.2"/><rect x="5" y="7.8" width="9" height="1.2"/></g></svg>
<div class="a" style="left:1709px;top:776px;width:93px;height:17px;background:#fff;box-shadow:0 0 0 1px #ececec"></div>
<div class="a" style="left:1710px;top:777px;width:74px;height:15px;border:1px solid #e0e0e0"></div>
<div class="t" style="left:1712px;top:780px;font-size:9.9px">Normal</div>
<div class="tri" style="left:1791px;top:783px;border-left-width:4px;border-right-width:4px;border-top-width:5px;border-top-color:#000"></div>
<div class="t" style="left:1810px;top:780px;font-size:10.3px">Opacity:</div>
<div class="a" style="left:1851px;top:776px;width:45px;height:17px;background:#fff;border:1px solid #c2c2c2"></div>
<div class="a" style="left:1880px;top:777px;width:15px;height:15px;background:linear-gradient(#f4f4f4,#e2e2e2);border-left:1px solid #ddd"></div>
<div class="a" style="left:1887px;top:780px;width:0;height:0;border-top:4px solid transparent;border-bottom:4px solid transparent;border-left:4px solid #333"></div>
<div class="t" style="left:1857px;top:780px;font-size:10.3px">100</div>
<div class="t" style="left:1898px;top:780px;font-size:10.3px">%</div>
<div class="sep" style="left:1701px;top:798px;width:214px;height:3px"></div>
<!-- ============ LAYERS ============ -->
<div class="tabbar" style="left:1701px;top:801px;width:214px;height:17px"></div>
<div class="tabon" style="left:1701px;top:801px;width:50px;height:17px"></div>
<div class="taboff" style="left:1751px;top:801px;width:125px;height:17px"></div>
<div class="ptab" style="left:1708px;top:805px">LAYERS</div>
<div class="ptab" style="left:1758px;top:805px;color:#3a3a3a">SEPARATIONS PREVIEW</div>
<svg class="pmenu" style="left:1897px;top:805px"><path d="M0 2 L4 2 L2 5Z" fill="#333"/><g fill="#333"><rect x="5" y="0" width="9" height="1.2"/><rect x="5" y="2.6" width="9" height="1.2"/><rect x="5" y="5.2" width="9" height="1.2"/><rect x="5" y="7.8" width="9" height="1.2"/></g></svg>
<div class="a" style="left:1703px;top:819px;width:211px;height:1px;background:#111"></div>
<div class="a" style="left:1898px;top:820px;width:15px;height:236px;background:#ececec"></div>
<div class="a" style="left:1901px;top:828px;width:0;height:0;border-left:4px solid transparent;border-right:4px solid transparent;border-bottom:4px solid #a8a8a8"></div>
<div class="a" style="left:1901px;top:1048px;width:0;height:0;border-left:4px solid transparent;border-right:4px solid transparent;border-top:4px solid #a8a8a8"></div>
<div class="a" style="left:1747px;top:820px;width:1px;height:19px;background:#111"></div>
<div class="a" style="left:1707px;top:822px;width:13px;height:15px;border:1px solid #f0f0f0;border-right-color:#c4c4c4;border-bottom-color:#c4c4c4"></div>
<div class="a" style="left:1723px;top:822px;width:12px;height:15px;border:1px solid #f0f0f0;border-right-color:#c4c4c4;border-bottom-color:#c4c4c4"></div>
<svg class="a" style="left:1706px;top:824px" width="16" height="12"><ellipse cx="7.8" cy="6" rx="5.6" ry="3.4" fill="#fff" stroke="#111" stroke-width="1"/><circle cx="7.8" cy="6" r="2.4" fill="#111"/></svg>
<div class="a" style="left:1739px;top:823px;width:4px;height:14px;background:#5b7cf0"></div>
<svg class="a" style="left:1751px;top:823px" width="9" height="14"><path d="M1.5 1.5 L7 7 L1.5 12.5Z" fill="#fff" stroke="#7a93b8" stroke-width="1"/></svg>
<div class="a" style="left:1763px;top:820px;width:135px;height:19px;background:#3399ff"></div>
<div class="a" style="left:1765px;top:821px;width:16px;height:17px;background:#fff;border:1px solid #111"></div>
<svg class="a" style="left:1766px;top:822px" width="14" height="15" viewBox="0 0 14 15">
<g transform="translate(0.5 1) scale(0.0158) translate(-363 -300)"><use href="#face" fill="none" stroke="#8a8a8a" stroke-width="40" style="--sw2:40px"/></g></svg>
<div class="t" style="left:1786px;top:824.5px;font-size:10.5px;font-weight:bold;color:#fff">Layer 1</div>
<div class="a" style="left:1873px;top:825px;width:9px;height:9px;border:1.2px solid #222;border-radius:50%"></div>
<div class="a" style="left:1891px;top:820px;width:0;height:0;border-left:6px solid transparent;border-top:6px solid #111"></div>
<div class="a" style="left:1703px;top:839px;width:195px;height:1px;background:#111"></div>
<div class="a" style="left:1703px;top:1056px;width:195px;height:1px;background:#111"></div>
<div class="t" style="left:1712px;top:1060px;font-size:9.7px">1 Layer</div>
<svg class="a" style="left:1780px;top:1058px" width="110" height="15">
<rect x="2.5" y="1.5" width="6" height="5" fill="none" stroke="#888" stroke-dasharray="1 1"/><circle cx="11" cy="9" r="4.5" fill="#fff" stroke="#222"/><path d="M11 9 L11 4.5 A4.5 4.5 0 0 0 6.5 9Z" fill="#111"/>
<path d="M31 6 L36 6 M34 4 L36 6 L34 8" fill="none" stroke="#111" stroke-width="1"/><rect x="38.5" y="3.5" width="7" height="8" fill="#111"/><rect x="39.5" y="7.5" width="3" height="3" fill="#fff"/>
<rect x="66.5" y="3.5" width="8" height="9" fill="#111"/><rect x="67.5" y="7.5" width="4" height="4" fill="#fff"/>
<path d="M98 5 L106 5 L105 13 L99 13Z" fill="#f2f2f2" stroke="#999"/><rect x="97" y="3" width="10" height="2" fill="#bbb"/>
</svg>

</body></html>
